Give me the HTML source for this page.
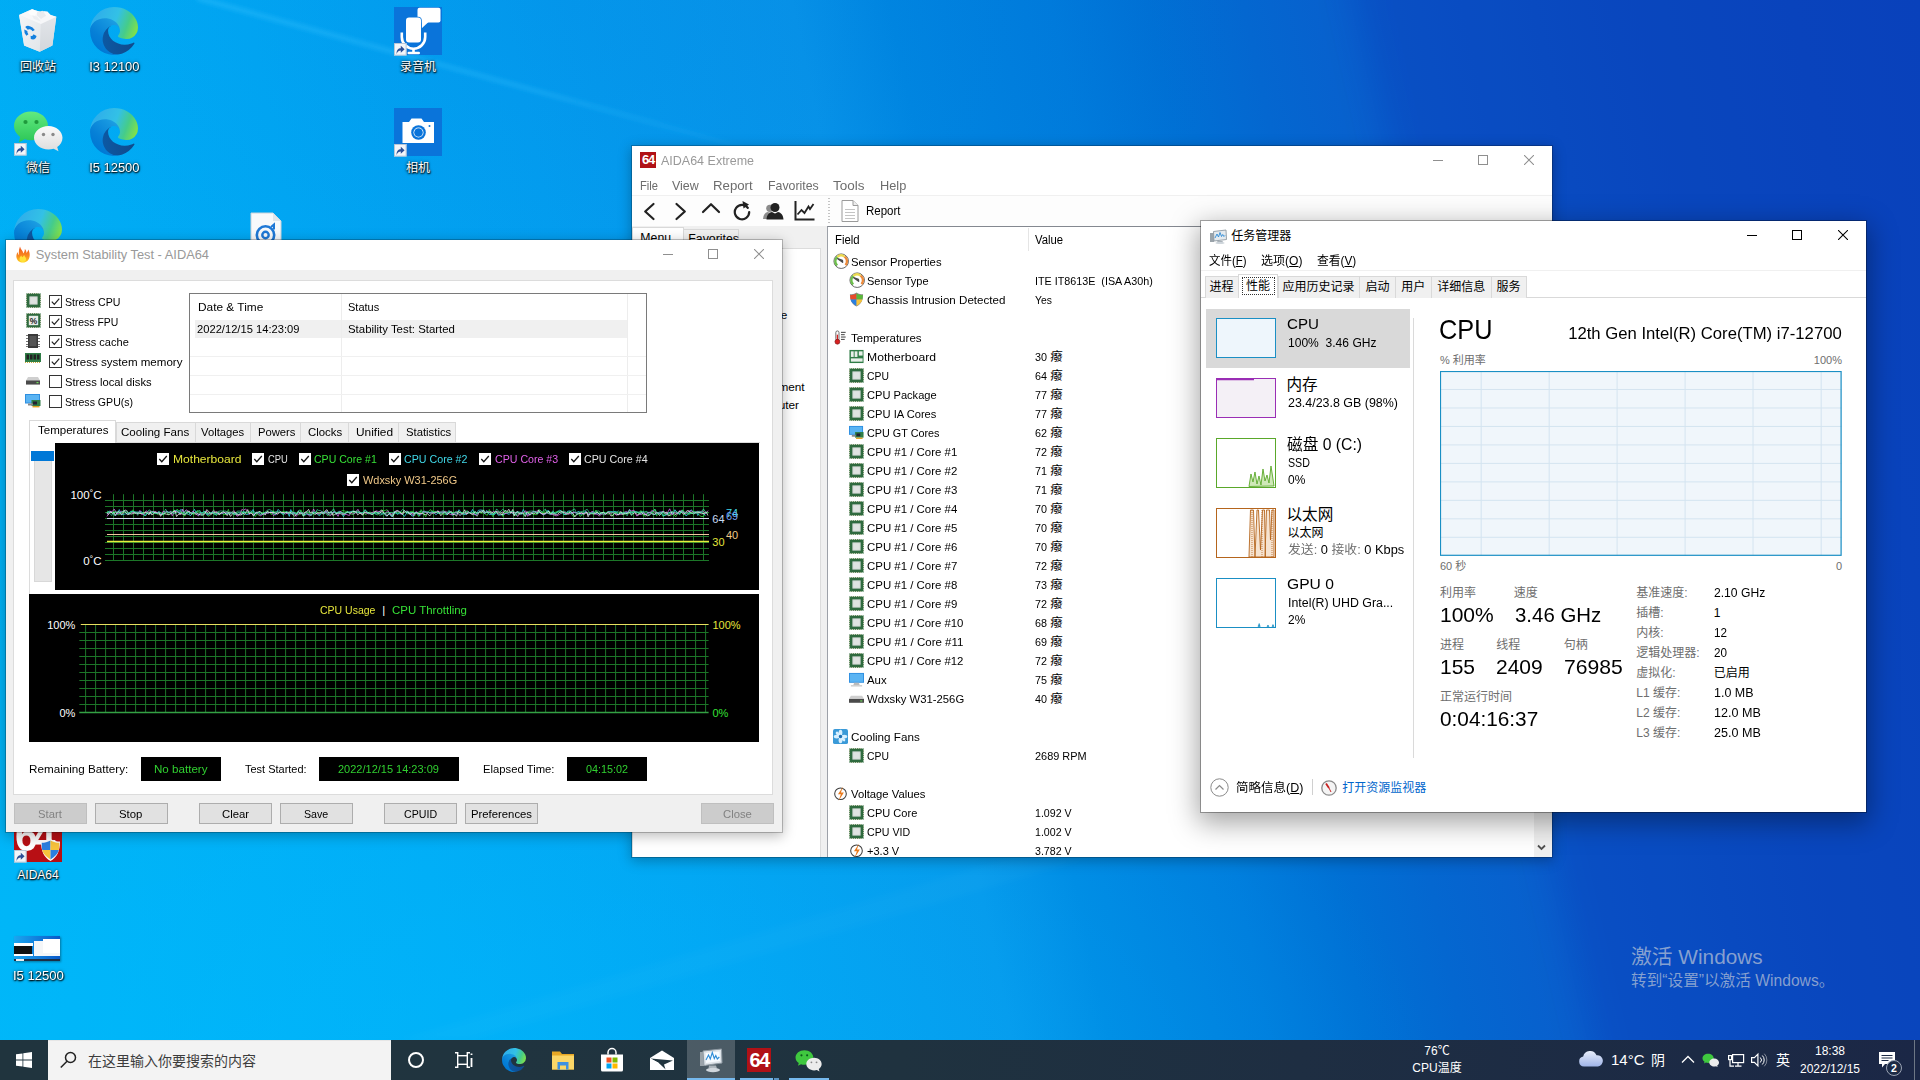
<!DOCTYPE html>
<html lang="zh-CN"><head><meta charset="utf-8"><title>desktop</title>
<style>
*{box-sizing:border-box;margin:0;padding:0}
html,body{width:1920px;height:1080px;overflow:hidden;background:#0a78d8}
body{font-family:"Liberation Sans","Noto Sans CJK SC",sans-serif;font-size:11.6px;color:#000;position:relative}
.a{position:absolute}
.t{position:absolute;white-space:nowrap;line-height:16px;height:16px}
#desk{position:absolute;left:0;top:0;width:1920px;height:1080px;overflow:hidden;
 background:
  radial-gradient(ellipse 1100px 650px at 350px 1150px,rgba(0,190,255,.5) 0,rgba(0,190,255,0) 100%),
  radial-gradient(ellipse 700px 420px at 560px 0px,rgba(0,70,190,.10) 0,rgba(0,70,190,0) 100%),
  linear-gradient(78deg,#00b4f6 0,#00b1f6 6%,#01a9f4 22%,#03a1f1 34%,#0796ea 47.500%,#0088e2 52%,#007cdc 59.500%,#0071d5 64%,#0467d0 68.500%,#0a5ccc 75.500%,#0a56c8 82%,#0a51c5 88%,#0a4ec3 94%,#0a4cc2 100%);}
.win{position:absolute;background:#fff;box-shadow:0 0 0 1px rgba(0,0,0,.22),0 3px 12px 1px rgba(0,0,0,.27)}
.win.act{box-shadow:0 0 0 1px rgba(0,0,0,.32),0 8px 26px 3px rgba(0,0,0,.36)}
.cap{position:absolute;stroke-width:1;fill:none}
.ico-l{position:absolute;color:#fff;font-size:12px;line-height:16px;text-align:center;width:90px;white-space:nowrap;
 text-shadow:0 1px 2px rgba(0,0,0,.9),0 0 3px rgba(0,0,0,.7),1px 1px 1px rgba(0,0,0,.6)}
</style></head>
<body>
<div id="desk">
<svg class="a" style="left:0;top:0" width="1920" height="1080" viewBox="0 0 1920 1080">
<defs>
<linearGradient id="bm1" x1="0" y1="0" x2="0" y2="1"><stop offset="0" stop-color="#fff" stop-opacity="0"/><stop offset=".5" stop-color="#fff" stop-opacity=".16"/><stop offset="1" stop-color="#fff" stop-opacity="0"/></linearGradient>
<linearGradient id="bmg" x1="197" y1="0" x2="745" y2="148" gradientUnits="userSpaceOnUse"><stop offset="0" stop-color="#38c4ff" stop-opacity=".42"/><stop offset=".6" stop-color="#38c4ff" stop-opacity=".32"/><stop offset="1" stop-color="#38c4ff" stop-opacity=".05"/></linearGradient><filter id="blr1" x="-5%" y="-20%" width="110%" height="140%"><feGaussianBlur stdDeviation="2"/></filter><filter id="blr2" x="-10%" y="-10%" width="120%" height="120%"><feGaussianBlur stdDeviation="18"/></filter><filter id="blr" x="-5%" y="-20%" width="110%" height="140%"><feGaussianBlur stdDeviation="3"/></filter><radialGradient id="gl1" cx="1080" cy="520" r="900" gradientUnits="userSpaceOnUse"><stop offset="0" stop-color="#2aa8f0" stop-opacity=".0"/><stop offset="1" stop-color="#2aa8f0" stop-opacity="0"/></radialGradient>
</defs>
<path d="M197 -2 L745 148" stroke="url(#bmg)" stroke-width="4.500" fill="none" filter="url(#blr1)"/>
<polygon points="1010,858 1090,858 470,1040 400,1040" fill="#fff" fill-opacity=".02" filter="url(#blr)"/>
<polygon points="1345,-40 2000,-40 2000,1120 1610,1120" fill="#001a90" fill-opacity=".14" filter="url(#blr2)"/>
</svg>
<svg class="a" style="left:17px;top:7px" width="42" height="46" viewBox="0 0 42 46">
<defs><linearGradient id="rb1" x1="0" y1="0" x2="1" y2="1"><stop offset="0" stop-color="#f3f5f7"/><stop offset="1" stop-color="#e1e5e9"/></linearGradient>
<linearGradient id="rb2" x1="0" y1="0" x2="0" y2="1"><stop offset="0" stop-color="#e2e5e9"/><stop offset="1" stop-color="#d3d7dc"/></linearGradient></defs>
<path d="M2.100 8 L14.900 2.200 L39.300 9.700 L35.400 38.600 L22.700 44.700 L7.100 38.600 Z" fill="#e6e9ed"/>
<path d="M2.100 8 L23.800 16.900 L22.700 44.700 L7.100 38.600 Z" fill="url(#rb1)"/>
<path d="M23.800 16.900 L39.300 9.700 L35.400 38.600 L22.700 44.700 Z" fill="url(#rb2)"/>
<path d="M2.100 8 L14.900 2.200 L39.300 9.700 L23.800 16.900 Z" fill="#f6f7f9"/>
<path d="M11 5.500 l4.500 -3.300 l5 2.800 l-2.500 3.500 l-4.500 -.5z" fill="#fdfdfd"/><path d="M20 5.200 l5.500 -1.500 l5 4 l-6.500 4.300 l-4 -3.500z" fill="#e9ebee"/><path d="M26 4 l4.500 .5 l4 4.500 l-5 .5z" fill="#f8f9fa"/><path d="M15 8.500 l5 1 l4 5 l-7 -2.500z" fill="#eceef1"/>
<g transform="matrix(1 .38 0 1 13.400 25.600)" fill="none" stroke="#1380de" stroke-width="3.100">
<path d="M-3.900 -2.700 A4.700 4.700 0 0 1 3.300 -3.300"/><path d="M4.600 .8 A4.700 4.700 0 0 1 .3 4.700"/><path d="M-3 3.600 A4.700 4.700 0 0 1 -4.600 -.6"/>
</g>
</svg>
<div class="ico-l" style="left:-7px;top:58.5px">回收站</div>
<svg class="a" style="left:90px;top:7px" width="48" height="48" viewBox="0 0 256 256">
<defs>
<linearGradient id="eg1a" x1="63" y1="84" x2="241" y2="84" gradientTransform="matrix(1 0 0 -1 0 266)" gradientUnits="userSpaceOnUse"><stop offset="0" stop-color="#0c59a4"/><stop offset="1" stop-color="#114a8b"/></linearGradient>
<linearGradient id="eg2a" x1="157" y1="161" x2="46" y2="40" gradientTransform="matrix(1 0 0 -1 0 266)" gradientUnits="userSpaceOnUse"><stop offset="0" stop-color="#1b9de2"/><stop offset=".16" stop-color="#1595df"/><stop offset=".67" stop-color="#0680d7"/><stop offset="1" stop-color="#0078d4"/></linearGradient>
<radialGradient id="eg3a" cx="-25" cy="218" r="380" gradientUnits="userSpaceOnUse" gradientTransform="translate(30 -170)"><stop offset="0" stop-color="#35c1f1"/><stop offset=".45" stop-color="#34c1ed"/><stop offset=".6" stop-color="#2fc2df"/><stop offset=".72" stop-color="#2bc3d2"/><stop offset=".88" stop-color="#36c752"/><stop offset="1" stop-color="#7fe04d"/></radialGradient>
<linearGradient id="eg4a" x1="40" y1="40" x2="250" y2="120" gradientUnits="userSpaceOnUse"><stop offset="0" stop-color="#2fb0ea"/><stop offset=".45" stop-color="#33c1e6"/><stop offset=".75" stop-color="#45cc8a"/><stop offset="1" stop-color="#7fe04d"/></linearGradient>
</defs>
<path d="M231.1 190.5a93.800 93.800 0 0 1-10.500 4.700 101.900 101.900 0 0 1-35.900 6.400c-47.300 0-88.500-32.500-88.500-74.300a31.500 31.500 0 0 1 16.400-27.300c-42.800 1.800-53.800 46.400-53.800 72.500 0 73.900 68.100 81.400 82.800 81.400 7.900 0 19.800-2.300 27-4.600l1.300-.4a128.300 128.300 0 0 0 66.600-52.800 4 4 0 0 0-5.400-5.600z" fill="url(#eg1a)"/>
<path d="M105.700 241.400a79.200 79.200 0 0 1-22.700-21.300 80.700 80.700 0 0 1 29.500-120c3.200-1.500 8.500-4.200 15.600-4.100a32.400 32.400 0 0 1 25.700 13 31.900 31.900 0 0 1 6.300 18.700c0-.2 24.500-79.600-80-79.600-43.900 0-80 41.600-80 78.200a130.200 130.200 0 0 0 12.100 56 128 128 0 0 0 156.400 67 75.500 75.500 0 0 1-62.800-7.900z" fill="url(#eg2a)"/>
<path d="M152.300 148.900c-.9 1-3.400 2.500-3.400 5.600 0 2.600 1.700 5.200 4.800 7.300 14.300 10 41.400 8.600 41.500 8.600a59.600 59.600 0 0 0 30.300-8.300 61.400 61.400 0 0 0 30.400-52.900c.3-22.400-8-37.300-11.300-43.900C223.500 24.200 178 0 128 0a128 128 0 0 0-128 126.200c.5-36.500 36.800-66 80-66 3.500 0 23.500.3 42 10 16.300 8.600 24.800 18.900 30.800 29.200 6.100 10.600 7.200 24.100 7.200 29.500 0 5.300-2.700 13.300-7.800 19.900z" fill="url(#eg4a)"/>
</svg>
<div class="ico-l" style="left:69px;top:58.5px"><span style="display:inline-block;transform:scaleX(1.075)">I3 12100</span></div>
<svg class="a" style="left:90px;top:108px" width="48" height="48" viewBox="0 0 256 256">
<defs>
<linearGradient id="eg1b" x1="63" y1="84" x2="241" y2="84" gradientTransform="matrix(1 0 0 -1 0 266)" gradientUnits="userSpaceOnUse"><stop offset="0" stop-color="#0c59a4"/><stop offset="1" stop-color="#114a8b"/></linearGradient>
<linearGradient id="eg2b" x1="157" y1="161" x2="46" y2="40" gradientTransform="matrix(1 0 0 -1 0 266)" gradientUnits="userSpaceOnUse"><stop offset="0" stop-color="#1b9de2"/><stop offset=".16" stop-color="#1595df"/><stop offset=".67" stop-color="#0680d7"/><stop offset="1" stop-color="#0078d4"/></linearGradient>
<radialGradient id="eg3b" cx="-25" cy="218" r="380" gradientUnits="userSpaceOnUse" gradientTransform="translate(30 -170)"><stop offset="0" stop-color="#35c1f1"/><stop offset=".45" stop-color="#34c1ed"/><stop offset=".6" stop-color="#2fc2df"/><stop offset=".72" stop-color="#2bc3d2"/><stop offset=".88" stop-color="#36c752"/><stop offset="1" stop-color="#7fe04d"/></radialGradient>
<linearGradient id="eg4b" x1="40" y1="40" x2="250" y2="120" gradientUnits="userSpaceOnUse"><stop offset="0" stop-color="#2fb0ea"/><stop offset=".45" stop-color="#33c1e6"/><stop offset=".75" stop-color="#45cc8a"/><stop offset="1" stop-color="#7fe04d"/></linearGradient>
</defs>
<path d="M231.1 190.5a93.800 93.800 0 0 1-10.500 4.700 101.900 101.900 0 0 1-35.900 6.400c-47.300 0-88.500-32.500-88.500-74.300a31.500 31.500 0 0 1 16.400-27.300c-42.800 1.800-53.800 46.400-53.800 72.500 0 73.900 68.100 81.400 82.800 81.400 7.900 0 19.800-2.300 27-4.600l1.300-.4a128.300 128.300 0 0 0 66.600-52.800 4 4 0 0 0-5.400-5.600z" fill="url(#eg1b)"/>
<path d="M105.700 241.400a79.200 79.200 0 0 1-22.700-21.300 80.700 80.700 0 0 1 29.500-120c3.200-1.500 8.500-4.200 15.600-4.100a32.400 32.400 0 0 1 25.700 13 31.900 31.900 0 0 1 6.300 18.700c0-.2 24.500-79.600-80-79.600-43.900 0-80 41.600-80 78.200a130.200 130.200 0 0 0 12.100 56 128 128 0 0 0 156.400 67 75.500 75.500 0 0 1-62.800-7.900z" fill="url(#eg2b)"/>
<path d="M152.300 148.900c-.9 1-3.400 2.500-3.400 5.600 0 2.600 1.700 5.200 4.800 7.300 14.300 10 41.400 8.600 41.500 8.600a59.600 59.600 0 0 0 30.300-8.300 61.400 61.400 0 0 0 30.400-52.900c.3-22.400-8-37.300-11.300-43.900C223.500 24.200 178 0 128 0a128 128 0 0 0-128 126.200c.5-36.500 36.800-66 80-66 3.500 0 23.500.3 42 10 16.300 8.600 24.800 18.900 30.800 29.200 6.100 10.600 7.200 24.100 7.200 29.500 0 5.300-2.700 13.300-7.800 19.900z" fill="url(#eg4b)"/>
</svg>
<div class="ico-l" style="left:69px;top:159.5px"><span style="display:inline-block;transform:scaleX(1.075)">I5 12500</span></div>
<svg class="a" style="left:14px;top:209px" width="48" height="48" viewBox="0 0 256 256">
<defs>
<linearGradient id="eg1c" x1="63" y1="84" x2="241" y2="84" gradientTransform="matrix(1 0 0 -1 0 266)" gradientUnits="userSpaceOnUse"><stop offset="0" stop-color="#0c59a4"/><stop offset="1" stop-color="#114a8b"/></linearGradient>
<linearGradient id="eg2c" x1="157" y1="161" x2="46" y2="40" gradientTransform="matrix(1 0 0 -1 0 266)" gradientUnits="userSpaceOnUse"><stop offset="0" stop-color="#1b9de2"/><stop offset=".16" stop-color="#1595df"/><stop offset=".67" stop-color="#0680d7"/><stop offset="1" stop-color="#0078d4"/></linearGradient>
<radialGradient id="eg3c" cx="-25" cy="218" r="380" gradientUnits="userSpaceOnUse" gradientTransform="translate(30 -170)"><stop offset="0" stop-color="#35c1f1"/><stop offset=".45" stop-color="#34c1ed"/><stop offset=".6" stop-color="#2fc2df"/><stop offset=".72" stop-color="#2bc3d2"/><stop offset=".88" stop-color="#36c752"/><stop offset="1" stop-color="#7fe04d"/></radialGradient>
<linearGradient id="eg4c" x1="40" y1="40" x2="250" y2="120" gradientUnits="userSpaceOnUse"><stop offset="0" stop-color="#2fb0ea"/><stop offset=".45" stop-color="#33c1e6"/><stop offset=".75" stop-color="#45cc8a"/><stop offset="1" stop-color="#7fe04d"/></linearGradient>
</defs>
<path d="M231.1 190.5a93.800 93.800 0 0 1-10.500 4.700 101.900 101.900 0 0 1-35.900 6.400c-47.300 0-88.500-32.500-88.500-74.300a31.500 31.500 0 0 1 16.400-27.300c-42.800 1.800-53.800 46.400-53.800 72.500 0 73.900 68.100 81.400 82.800 81.400 7.900 0 19.800-2.300 27-4.600l1.300-.4a128.300 128.300 0 0 0 66.600-52.800 4 4 0 0 0-5.400-5.600z" fill="url(#eg1c)"/>
<path d="M105.700 241.400a79.200 79.200 0 0 1-22.700-21.300 80.700 80.700 0 0 1 29.500-120c3.200-1.500 8.500-4.200 15.600-4.100a32.400 32.400 0 0 1 25.700 13 31.900 31.900 0 0 1 6.300 18.700c0-.2 24.500-79.600-80-79.600-43.900 0-80 41.600-80 78.200a130.200 130.200 0 0 0 12.100 56 128 128 0 0 0 156.400 67 75.500 75.500 0 0 1-62.800-7.900z" fill="url(#eg2c)"/>
<path d="M152.300 148.900c-.9 1-3.400 2.500-3.400 5.600 0 2.600 1.700 5.200 4.800 7.300 14.300 10 41.400 8.600 41.500 8.600a59.600 59.600 0 0 0 30.300-8.300 61.400 61.400 0 0 0 30.400-52.900c.3-22.400-8-37.300-11.300-43.900C223.500 24.200 178 0 128 0a128 128 0 0 0-128 126.200c.5-36.500 36.800-66 80-66 3.500 0 23.500.3 42 10 16.300 8.600 24.800 18.900 30.800 29.200 6.100 10.600 7.200 24.100 7.200 29.500 0 5.300-2.700 13.300-7.800 19.900z" fill="url(#eg4c)"/>
</svg>
<div class="a" style="left:394px;top:7px;width:48px;height:48px;background:#0a74da"></div>
<svg class="a" style="left:394px;top:7px" width="48" height="48" viewBox="0 0 48 48" fill="#fff">
<rect x="23.500" y=".8" width="23" height="14.700" rx="2"/><path d="M27.500 15h7l-7 6.500z"/>
<rect x="11.200" y="9.700" width="16.600" height="26.600" rx="3.800" fill="#0a74da"/>
<rect x="12" y="10.500" width="15" height="25" rx="3"/>
<path d="M7.800 25.500v4.500a11.700 11.700 0 0 0 23.400 0v-4.500" fill="none" stroke="#fff" stroke-width="2.600"/>
<rect x="18.200" y="41" width="2.600" height="4.500"/><rect x="13.500" y="44.700" width="12.500" height="2.500" rx="1.200"/>
</svg>
<svg class="a" style="left:394px;top:43px" width="12.500" height="12.500" viewBox="0 0 12.500 12.500"><rect width="12.500" height="12.500" fill="#f2f5f9"/><rect x=".4" y=".4" width="11.700" height="11.700" fill="none" stroke="#a9bccf" stroke-width=".8"/><path d="M2.600 11 C2.400 7.200 4.200 5.200 6.800 5.200 L6.800 2.800 L10.600 6.300 L6.800 9.800 L6.800 7.500 C5 7.500 3.600 8.300 2.600 11Z" fill="#2c4f96"/></svg>
<div class="ico-l" style="left:373px;top:58.5px">录音机</div>
<div class="a" style="left:394px;top:108px;width:48px;height:48px;background:#0a74da"></div>
<svg class="a" style="left:394px;top:108px" width="48" height="48" viewBox="0 0 48 48">
<path d="M8.500 14h6.500l2.500-3.500h10l2.500 3.500h10v21h-31.500z" fill="#fff"/>
<circle cx="24.500" cy="24.500" r="7.300" fill="#0a74da"/><circle cx="24.500" cy="24.500" r="5" fill="#fff"/><circle cx="24.500" cy="24.500" r="4.300" fill="#0a74da"/>
<circle cx="35.500" cy="18" r="1" fill="#0a74da"/></svg>
<svg class="a" style="left:394px;top:144px" width="12.500" height="12.500" viewBox="0 0 12.500 12.500"><rect width="12.500" height="12.500" fill="#f2f5f9"/><rect x=".4" y=".4" width="11.700" height="11.700" fill="none" stroke="#a9bccf" stroke-width=".8"/><path d="M2.600 11 C2.400 7.200 4.200 5.200 6.800 5.200 L6.800 2.800 L10.600 6.300 L6.800 9.800 L6.800 7.500 C5 7.500 3.600 8.300 2.600 11Z" fill="#2c4f96"/></svg>
<div class="ico-l" style="left:373px;top:159.5px">相机</div>
<svg class="a" style="left:13px;top:110px" width="52" height="44" viewBox="0 0 52 44">
<defs><linearGradient id="wc1" x1="0" y1="0" x2="0" y2="1"><stop offset="0" stop-color="#62ea80"/><stop offset="1" stop-color="#2cc656"/></linearGradient>
<linearGradient id="wc2" x1="0" y1="0" x2="0" y2="1"><stop offset="0" stop-color="#fafafa"/><stop offset="1" stop-color="#dcdcdc"/></linearGradient></defs>
<path d="M18 1.500C8.600 1.500 1 7.800 1 15.800c0 4.500 2.400 8.400 6.200 11.100L5.700 32.500l6-3.200c2 .6 4.100 1 6.300 1 9.400 0 17-6.400 17-14.500S27.400 1.500 18 1.500z" fill="url(#wc1)"/>
<circle cx="12.500" cy="12" r="2.100" fill="#1f9a3c"/><circle cx="23.500" cy="12" r="2.100" fill="#1f9a3c"/>
<path d="M35.500 16C27.500 16 21 21.200 21 27.700S27.500 39.500 35.500 39.500c1.800 0 3.500-.3 5.100-.8l4.900 2.600-1.300-4.300c3.300-2.100 5.300-5.400 5.300-9.200C49.500 21.200 43.200 16 35.500 16z" fill="url(#wc2)"/>
<circle cx="30.500" cy="24.500" r="1.700" fill="#8a8a8a"/><circle cx="40" cy="24.500" r="1.700" fill="#8a8a8a"/>
</svg>
<svg class="a" style="left:14px;top:143px" width="12.500" height="12.500" viewBox="0 0 12.500 12.500"><rect width="12.500" height="12.500" fill="#f2f5f9"/><rect x=".4" y=".4" width="11.700" height="11.700" fill="none" stroke="#a9bccf" stroke-width=".8"/><path d="M2.600 11 C2.400 7.200 4.200 5.200 6.800 5.200 L6.800 2.800 L10.600 6.300 L6.800 9.800 L6.800 7.500 C5 7.500 3.600 8.300 2.600 11Z" fill="#2c4f96"/></svg>
<div class="ico-l" style="left:-7px;top:159.5px">微信</div>
<svg class="a" style="left:250px;top:212px" width="32" height="40" viewBox="0 0 32 40">
<path d="M1 1h22l8 8v30h-30z" fill="#f7f9fb" stroke="#c9d3dc" stroke-width="1"/><path d="M23 1v8h8z" fill="#dfe6ec"/>
<circle cx="15.500" cy="23" r="8.700" fill="none" stroke="#1e78d6" stroke-width="2.600"/><circle cx="15.500" cy="23" r="3.200" fill="none" stroke="#1e78d6" stroke-width="2.400"/><path d="M21 15l3-2.500v5" fill="none" stroke="#1e78d6" stroke-width="2"/>
</svg>
<div class="a" style="left:14px;top:814px;width:48px;height:48px;background:#b80f14;overflow:hidden">
<div class="a" style="left:1px;top:-2px;font:bold 44px/48px 'Liberation Sans',sans-serif;color:#fff;letter-spacing:-5px;transform:scaleX(.92);transform-origin:0 0">64</div></div>
<svg class="a" style="left:40px;top:838px" width="21" height="24" viewBox="0 0 21 24"><path d="M10.500 1C7 3 4 3.500 1 3.500c0 9 2.500 15.500 9.500 19.500 7-4 9.500-10.500 9.500-19.500-3 0-6-.5-9.500-2.500z" fill="#fff"/>
<path d="M10.500 2.500v9.500h-8.300c-.4-2.300-.5-4.600-.5-7.200 3 0 5.800-.6 8.800-2.300z" fill="#2a7fe0"/><path d="M10.500 2.500c3 1.700 5.800 2.300 8.800 2.300 0 2.600-.1 4.900-.5 7.200h-8.300z" fill="#f7c33c"/>
<path d="M2.200 12h8.300v9.500c-4.700-2.800-7.300-5.700-8.300-9.500z" fill="#f7c33c"/><path d="M10.500 12h8.300c-1 3.800-3.600 6.700-8.300 9.500z" fill="#2a7fe0"/></svg>
<svg class="a" style="left:14px;top:850px" width="12.500" height="12.500" viewBox="0 0 12.500 12.500"><rect width="12.500" height="12.500" fill="#f2f5f9"/><rect x=".4" y=".4" width="11.700" height="11.700" fill="none" stroke="#a9bccf" stroke-width=".8"/><path d="M2.600 11 C2.400 7.200 4.200 5.200 6.800 5.200 L6.800 2.800 L10.600 6.300 L6.800 9.800 L6.800 7.500 C5 7.500 3.600 8.300 2.600 11Z" fill="#2c4f96"/></svg>
<div class="ico-l" style="left:-7px;top:866.5px"><span style="display:inline-block;transform:scaleX(1.0)">AIDA64</span></div>
<div class="a" style="left:14px;top:936px;width:46px;height:25px;background:linear-gradient(90deg,#1aa6f0,#0a58c8);box-shadow:1px 1px 2px rgba(0,0,0,.35)">
<div class="a" style="left:0;top:10px;width:18px;height:8px;background:#111"></div><div class="a" style="left:0;top:7px;width:19px;height:3px;background:#fff"></div><div class="a" style="left:0;top:18px;width:19px;height:2px;background:#fff"></div>
<div class="a" style="left:20px;top:5px;width:26px;height:15px;background:#f4f6f8"></div><div class="a" style="left:29px;top:3px;width:17px;height:14px;background:#fff"></div>
<div class="a" style="left:0;top:23px;width:46px;height:2px;background:#1c2f44"></div><div class="a" style="left:2px;top:23px;width:8px;height:2px;background:#eee"></div></div>
<div class="ico-l" style="left:-6.5px;top:967.5px"><span style="display:inline-block;transform:scaleX(1.09)">I5 12500</span></div>
<div class="t" style="left:1631px;top:945px;font-size:20.800px;line-height:24px;height:24px;color:rgba(200,206,216,.66)">激活 Windows</div>
<div class="t" style="left:1631px;top:971px;font-size:15.650px;line-height:20px;height:20px;color:rgba(200,206,216,.66)">转到“设置”以激活 Windows。</div>
<div class="win" style="left:632px;top:146px;width:920px;height:711px;"><div class="a" style="left:0;top:0;width:920px;height:711px;overflow:hidden"><div class="a" style="left:8px;top:6px;width:16px;height:16px;background:#b01116;overflow:hidden"><div class="a" style="left:0;top:1px;width:16px;text-align:center;font:bold 13px/14px 'Liberation Sans',sans-serif;color:#fff;letter-spacing:-1.200px">64</div></div>
<div class="t" style="left:29.3px;top:6.7px;line-height:16px;height:16px;font-size:12.800px;color:#999;transform:scaleX(0.9766);transform-origin:0 50%">AIDA64 Extreme</div>
<svg class="a" style="left:801px;top:9px;" width="10" height="10" viewBox="0 0 10 10"><path d="M0 5.500h10" stroke="#8f8f8f" stroke-width="1" fill="none"/></svg>
<svg class="a" style="left:846px;top:9px;" width="10" height="10" viewBox="0 0 10 10"><rect x=".5" y=".5" width="9" height="9" stroke="#8f8f8f" stroke-width="1" fill="none"/></svg>
<svg class="a" style="left:892px;top:9px;" width="10" height="10" viewBox="0 0 10 10"><path d="M0 0 10 10M10 0 0 10" stroke="#8f8f8f" stroke-width="1.050" fill="none"/></svg>
<div class="t" style="left:7.5px;top:31.8px;line-height:16px;height:16px;font-size:12.600px;color:#6d6d6d;transform:scaleX(0.8865);transform-origin:0 50%">File</div>
<div class="t" style="left:40px;top:31.8px;line-height:16px;height:16px;font-size:12.600px;color:#6d6d6d;transform:scaleX(0.9895);transform-origin:0 50%">View</div>
<div class="t" style="left:81.3px;top:31.8px;line-height:16px;height:16px;font-size:12.600px;color:#6d6d6d;transform:scaleX(1.0497);transform-origin:0 50%">Report</div>
<div class="t" style="left:135.5px;top:31.8px;line-height:16px;height:16px;font-size:12.600px;color:#6d6d6d;transform:scaleX(0.9804);transform-origin:0 50%">Favorites</div>
<div class="t" style="left:201px;top:31.8px;line-height:16px;height:16px;font-size:12.600px;color:#6d6d6d;transform:scaleX(1.0709);transform-origin:0 50%">Tools</div>
<div class="t" style="left:247.5px;top:31.8px;line-height:16px;height:16px;font-size:12.600px;color:#6d6d6d;transform:scaleX(1.0149);transform-origin:0 50%">Help</div>
<div class="a" style="left:0px;top:48.5px;width:920px;height:1.5px;background:#f0f0f0"></div>
<div class="a" style="left:0px;top:50px;width:920px;height:30px;background:#fdfdfd"></div>
<svg class="a" style="left:11px;top:55.5px;" width="13" height="19" viewBox="0 0 13 19"><path d="M10.500 2 2.200 9.500 10.500 17" fill="none" stroke="#222" stroke-width="2.200" stroke-linecap="round" stroke-linejoin="round"/></svg>
<svg class="a" style="left:41.5px;top:55.5px;" width="13" height="19" viewBox="0 0 13 19"><path d="M2.500 2 10.800 9.500 2.500 17" fill="none" stroke="#222" stroke-width="2.200" stroke-linecap="round" stroke-linejoin="round"/></svg>
<svg class="a" style="left:69px;top:56px;" width="20" height="12" viewBox="0 0 20 12"><path d="M2 10 10 2.200 18 10" fill="none" stroke="#222" stroke-width="2.200" stroke-linecap="round" stroke-linejoin="round"/></svg>
<svg class="a" style="left:99.5px;top:54px;" width="20" height="21" viewBox="0 0 20 21"><path d="M15.800 7.800A7.200 7.200 0 1 0 17.200 12" fill="none" stroke="#222" stroke-width="2.200" stroke-linecap="round" stroke-linejoin="round"/><path d="M10.500 1l6.500 3.500-5.500 4z" fill="#222"/></svg>
<svg class="a" style="left:131px;top:56px;" width="21" height="18" viewBox="0 0 21 18"><circle cx="6.800" cy="6.300" r="3.600" fill="#8c8c8c"/><path d="M0 17c.3-4 2-6.300 4.500-7l4 1-2 6z" fill="#8c8c8c"/><circle cx="12" cy="5.500" r="4.500" fill="#222"/><path d="M3.500 17.500c.3-4.500 2.500-7 5.500-7.500l3 1.500 3-1.500c3 .5 5.200 3 5.500 7.500z" fill="#222"/></svg>
<svg class="a" style="left:162px;top:55px;" width="21" height="20" viewBox="0 0 21 20"><path d="M1.500 0v18.500h19" fill="none" stroke="#222" stroke-width="2"/><path d="M3.500 13.500 7.500 9l3 3 4-6.500 1.500 2.500 3.500-5" fill="none" stroke="#222" stroke-width="1.800"/></svg>
<div class="a" style="left:196.3px;top:51.5px;width:1.5px;height:26px;background:repeating-linear-gradient(180deg,#c4c4c4 0,#c4c4c4 1.500px,transparent 1.500px,transparent 3px)"></div>
<svg class="a" style="left:208.5px;top:54px;" width="18" height="22" viewBox="0 0 18 22"><path d="M1 .5h11l5 5v16h-16z" fill="#fff" stroke="#9a9a9a" stroke-width="1"/><path d="M12 .5v5h5" fill="#eee" stroke="#9a9a9a" stroke-width="1"/><path d="M4 9.500h10M4 12.500h10M4 15.500h10M4 18.500h10" stroke="#c4c4c4" stroke-width="1"/></svg>
<div class="t" style="left:234.3px;top:56.8px;line-height:16px;height:16px;font-size:12px;transform:scaleX(0.9578);transform-origin:0 50%">Report</div>
<div class="a" style="left:0px;top:80px;width:920px;height:631px;background:#f0f0f0"></div>
<div class="a" style="left:0px;top:101.5px;width:188.8px;height:610px;background:#fff;border:1px solid #dcdcdc"></div>
<div class="a" style="left:51px;top:82.5px;width:56px;height:18px;background:#f0f0f0;border:1px solid #d9d9d9"></div>
<div class="a" style="left:0px;top:80.5px;width:51.5px;height:20px;background:#fff;border:1px solid #d9d9d9;border-bottom:none"></div>
<div class="t" style="left:8.3px;top:83.5px;line-height:16px;height:16px;font-size:12.300px">Menu</div>
<div class="t" style="left:56.3px;top:85px;line-height:16px;height:16px;font-size:12.300px">Favorites</div>
<div class="t" style="right:764.6px;top:161px;line-height:16px;height:16px;font-size:11.800px">Storage</div>
<div class="t" style="right:747.4px;top:233px;line-height:16px;height:16px;font-size:11.800px">Management</div>
<div class="t" style="right:753px;top:251px;line-height:16px;height:16px;font-size:11.800px">Computer</div>
<div class="a" style="left:195px;top:80px;width:723.5px;height:631px;background:#fff;border-top:1px solid #848890;border-left:1px solid #9da1a8"></div>
<div class="a" style="left:395.8px;top:82px;width:1px;height:23px;background:#e5e5e5"></div>
<div class="t" style="left:203.3px;top:85.8px;line-height:16px;height:16px;font-size:12px;transform:scaleX(0.9496);transform-origin:0 50%">Field</div>
<div class="t" style="left:403px;top:85.8px;line-height:16px;height:16px;font-size:12px;transform:scaleX(0.9429);transform-origin:0 50%">Value</div>
<div class="a" style="left:902px;top:81.5px;width:16.5px;height:629.5px;background:#f0f0f0"></div>
<svg class="a" style="left:904.5px;top:697.5px;" width="9" height="7" viewBox="0 0 9 7"><path d="M1 1.500 4.500 5 8 1.500" fill="none" stroke="#505050" stroke-width="1.800"/></svg>
<svg class="a" style="left:200.9px;top:107.1px;" width="16.4" height="16.4" viewBox="0 0 16 16"><circle cx="8" cy="8" r="7.100" fill="#fff" stroke="#5c5c5c" stroke-width=".9"/><path d="M4.100 12.200A5.600 5.600 0 0 1 4.300 3.700" fill="none" stroke="#6cbf4a" stroke-width="2.300"/><path d="M4.300 3.700A5.600 5.600 0 0 1 11.300 3.500" fill="none" stroke="#ecd94e" stroke-width="2.300"/><path d="M11.300 3.500A5.600 5.600 0 0 1 12.200 11.800" fill="none" stroke="#ec8a3a" stroke-width="2.300"/><path d="M9.400 9 4.600 5.600 9.200 7.200z" fill="#4a4a4a" stroke="#4a4a4a" stroke-width="1.300" stroke-linejoin="round"/></svg>
<div class="t" style="left:218.6px;top:108px;line-height:16px;height:16px;font-size:11.800px;transform:scaleX(0.9592);transform-origin:0 50%">Sensor Properties</div>
<svg class="a" style="left:216.8px;top:126.1px;" width="16.4" height="16.4" viewBox="0 0 16 16"><circle cx="8" cy="8" r="7.100" fill="#fff" stroke="#5c5c5c" stroke-width=".9"/><path d="M4.100 12.200A5.600 5.600 0 0 1 4.300 3.700" fill="none" stroke="#6cbf4a" stroke-width="2.300"/><path d="M4.300 3.700A5.600 5.600 0 0 1 11.300 3.500" fill="none" stroke="#ecd94e" stroke-width="2.300"/><path d="M11.300 3.500A5.600 5.600 0 0 1 12.200 11.800" fill="none" stroke="#ec8a3a" stroke-width="2.300"/><path d="M9.400 9 4.600 5.600 9.200 7.200z" fill="#4a4a4a" stroke="#4a4a4a" stroke-width="1.300" stroke-linejoin="round"/></svg>
<div class="t" style="left:234.8px;top:127px;line-height:16px;height:16px;font-size:11.800px;transform:scaleX(0.9328);transform-origin:0 50%">Sensor Type</div>
<div class="t" style="left:403px;top:127px;line-height:16px;height:16px;font-size:11.800px;transform:scaleX(0.9116);transform-origin:0 50%">ITE IT8613E&nbsp; (ISA A30h)</div>
<svg class="a" style="left:217.1px;top:145.8px;" width="15" height="15" viewBox="0 0 16 16"><path d="M8 .5C5.500 2 3.500 2.500 1 2.500c0 6 1.500 10.500 7 13 5.500-2.500 7-7 7-13-2.500 0-4.500-.5-7-2z" fill="#8a8a8a"/><path d="M8 1.500v6.500H1.700c-.3-1.500-.4-3-.4-4.700 2.300 0 4.300-.6 6.700-1.800z" fill="#e84a2a"/><path d="M8 1.500c2.400 1.200 4.400 1.800 6.700 1.800 0 1.700-.1 3.200-.4 4.700H8z" fill="#5ab83a"/><path d="M1.700 8H8v6.800C4.500 13 2.500 11 1.700 8z" fill="#2a7fe0"/><path d="M8 8h6.300c-.8 3-2.800 5-6.300 6.800z" fill="#f7c33c"/></svg>
<div class="t" style="left:234.8px;top:146px;line-height:16px;height:16px;font-size:11.800px;transform:scaleX(0.9815);transform-origin:0 50%">Chassis Intrusion Detected</div>
<div class="t" style="left:403px;top:146px;line-height:16px;height:16px;font-size:11.800px;transform:scaleX(0.8779);transform-origin:0 50%">Yes</div>
<svg class="a" style="left:201.2px;top:183.8px;" width="15" height="15" viewBox="0 0 16 16"><rect x="3" y="1" width="3.400" height="10" rx="1.700" fill="#fff" stroke="#555" stroke-width=".9"/><rect x="4" y="5" width="1.400" height="6" fill="#d82020"/><circle cx="4.700" cy="12.500" r="2.600" fill="#d82020" stroke="#7a1010" stroke-width=".7"/><path d="M8.500 2.500h5M8.500 5h4M8.500 7.500h5M8.500 10h4" stroke="#333" stroke-width="1"/></svg>
<div class="t" style="left:218.6px;top:184px;line-height:16px;height:16px;font-size:11.800px;transform:scaleX(0.9786);transform-origin:0 50%">Temperatures</div>
<svg class="a" style="left:217.1px;top:202.8px;" width="15" height="15" viewBox="0 0 16 16"><rect x=".5" y="1" width="15" height="14" fill="#2f7d46"/><rect x="2" y="2.500" width="3" height="6" fill="#e8efe9"/><rect x="6" y="2.500" width="3" height="6" fill="#e8efe9"/><rect x="10.500" y="2.500" width="4" height="4.500" fill="#e8efe9"/><rect x="2" y="10" width="12.500" height="3.500" fill="#e8efe9"/></svg>
<div class="t" style="left:234.8px;top:203px;line-height:16px;height:16px;font-size:11.800px;transform:scaleX(1.0313);transform-origin:0 50%">Motherboard</div>
<div class="t" style="left:403px;top:203px;line-height:16px;height:16px;font-size:11.800px;transform:scaleX(0.9142);transform-origin:0 50%">30</div>
<div class="t" style="left:418.3px;top:203px;line-height:16px;height:16px;font-size:12.500px">癈</div>
<svg class="a" style="left:217.1px;top:221.8px;" width="15" height="15" viewBox="0 0 16 16"><rect x="1" y="1" width="14" height="14" fill="#2f6b3f"/><path d="M2.500 0v16M4.500 0v16M6.500 0v16M8.500 0v16M10.500 0v16M12.500 0v16M0 2.500h16M0 4.500h16M0 6.500h16M0 8.500h16M0 10.500h16M0 12.500h16" stroke="#8a7a3a" stroke-width=".6" stroke-dasharray="1 14" /><rect x=".5" y=".5" width="15" height="15" fill="none" stroke="#3f7a4c" stroke-width="1" stroke-dasharray="1 1"/><rect x="1.500" y="1.500" width="13" height="13" fill="#2f6b3f"/><rect x="4" y="4" width="8" height="8" fill="#dfe3e1"/><rect x="4" y="4" width="8" height="8" fill="none" stroke="#b8c4bc" stroke-width=".8"/></svg>
<div class="t" style="left:234.8px;top:222px;line-height:16px;height:16px;font-size:11.800px;transform:scaleX(0.8790);transform-origin:0 50%">CPU</div>
<div class="t" style="left:403px;top:222px;line-height:16px;height:16px;font-size:11.800px;transform:scaleX(0.9142);transform-origin:0 50%">64</div>
<div class="t" style="left:418.3px;top:222px;line-height:16px;height:16px;font-size:12.500px">癈</div>
<svg class="a" style="left:217.1px;top:240.8px;" width="15" height="15" viewBox="0 0 16 16"><rect x="1" y="1" width="14" height="14" fill="#2f6b3f"/><path d="M2.500 0v16M4.500 0v16M6.500 0v16M8.500 0v16M10.500 0v16M12.500 0v16M0 2.500h16M0 4.500h16M0 6.500h16M0 8.500h16M0 10.500h16M0 12.500h16" stroke="#8a7a3a" stroke-width=".6" stroke-dasharray="1 14" /><rect x=".5" y=".5" width="15" height="15" fill="none" stroke="#3f7a4c" stroke-width="1" stroke-dasharray="1 1"/><rect x="1.500" y="1.500" width="13" height="13" fill="#2f6b3f"/><rect x="4" y="4" width="8" height="8" fill="#dfe3e1"/><rect x="4" y="4" width="8" height="8" fill="none" stroke="#b8c4bc" stroke-width=".8"/></svg>
<div class="t" style="left:234.8px;top:241px;line-height:16px;height:16px;font-size:11.800px;transform:scaleX(0.9404);transform-origin:0 50%">CPU Package</div>
<div class="t" style="left:403px;top:241px;line-height:16px;height:16px;font-size:11.800px;transform:scaleX(0.9142);transform-origin:0 50%">77</div>
<div class="t" style="left:418.3px;top:241px;line-height:16px;height:16px;font-size:12.500px">癈</div>
<svg class="a" style="left:217.1px;top:259.8px;" width="15" height="15" viewBox="0 0 16 16"><rect x="1" y="1" width="14" height="14" fill="#2f6b3f"/><path d="M2.500 0v16M4.500 0v16M6.500 0v16M8.500 0v16M10.500 0v16M12.500 0v16M0 2.500h16M0 4.500h16M0 6.500h16M0 8.500h16M0 10.500h16M0 12.500h16" stroke="#8a7a3a" stroke-width=".6" stroke-dasharray="1 14" /><rect x=".5" y=".5" width="15" height="15" fill="none" stroke="#3f7a4c" stroke-width="1" stroke-dasharray="1 1"/><rect x="1.500" y="1.500" width="13" height="13" fill="#2f6b3f"/><rect x="4" y="4" width="8" height="8" fill="#dfe3e1"/><rect x="4" y="4" width="8" height="8" fill="none" stroke="#b8c4bc" stroke-width=".8"/></svg>
<div class="t" style="left:234.8px;top:260px;line-height:16px;height:16px;font-size:11.800px;transform:scaleX(0.9449);transform-origin:0 50%">CPU IA Cores</div>
<div class="t" style="left:403px;top:260px;line-height:16px;height:16px;font-size:11.800px;transform:scaleX(0.9142);transform-origin:0 50%">77</div>
<div class="t" style="left:418.3px;top:260px;line-height:16px;height:16px;font-size:12.500px">癈</div>
<svg class="a" style="left:217.1px;top:278.8px;" width="15" height="15" viewBox="0 0 16 16"><rect x="0" y="1" width="15" height="9.500" fill="#2f8fe0"/><rect x="1" y="2" width="13" height="7.500" fill="#5ab4f3"/><rect x="6.500" y="7.500" width="9" height="6" fill="#2f7d46"/><rect x="8" y="9" width="4" height="3" fill="#223"/><path d="M7.500 14.200h7" stroke="#e0a020" stroke-width="1.400"/><path d="M3 10.500h4v2h-4z" fill="#888"/></svg>
<div class="t" style="left:234.8px;top:279px;line-height:16px;height:16px;font-size:11.800px;transform:scaleX(0.9163);transform-origin:0 50%">CPU GT Cores</div>
<div class="t" style="left:403px;top:279px;line-height:16px;height:16px;font-size:11.800px;transform:scaleX(0.9142);transform-origin:0 50%">62</div>
<div class="t" style="left:418.3px;top:279px;line-height:16px;height:16px;font-size:12.500px">癈</div>
<svg class="a" style="left:217.1px;top:297.8px;" width="15" height="15" viewBox="0 0 16 16"><rect x="1" y="1" width="14" height="14" fill="#2f6b3f"/><path d="M2.500 0v16M4.500 0v16M6.500 0v16M8.500 0v16M10.500 0v16M12.500 0v16M0 2.500h16M0 4.500h16M0 6.500h16M0 8.500h16M0 10.500h16M0 12.500h16" stroke="#8a7a3a" stroke-width=".6" stroke-dasharray="1 14" /><rect x=".5" y=".5" width="15" height="15" fill="none" stroke="#3f7a4c" stroke-width="1" stroke-dasharray="1 1"/><rect x="1.500" y="1.500" width="13" height="13" fill="#2f6b3f"/><rect x="4" y="4" width="8" height="8" fill="#dfe3e1"/><rect x="4" y="4" width="8" height="8" fill="none" stroke="#b8c4bc" stroke-width=".8"/></svg>
<div class="t" style="left:234.8px;top:298px;line-height:16px;height:16px;font-size:11.800px;transform:scaleX(0.9696);transform-origin:0 50%">CPU #1 / Core #1</div>
<div class="t" style="left:403px;top:298px;line-height:16px;height:16px;font-size:11.800px;transform:scaleX(0.9142);transform-origin:0 50%">72</div>
<div class="t" style="left:418.3px;top:298px;line-height:16px;height:16px;font-size:12.500px">癈</div>
<svg class="a" style="left:217.1px;top:316.8px;" width="15" height="15" viewBox="0 0 16 16"><rect x="1" y="1" width="14" height="14" fill="#2f6b3f"/><path d="M2.500 0v16M4.500 0v16M6.500 0v16M8.500 0v16M10.500 0v16M12.500 0v16M0 2.500h16M0 4.500h16M0 6.500h16M0 8.500h16M0 10.500h16M0 12.500h16" stroke="#8a7a3a" stroke-width=".6" stroke-dasharray="1 14" /><rect x=".5" y=".5" width="15" height="15" fill="none" stroke="#3f7a4c" stroke-width="1" stroke-dasharray="1 1"/><rect x="1.500" y="1.500" width="13" height="13" fill="#2f6b3f"/><rect x="4" y="4" width="8" height="8" fill="#dfe3e1"/><rect x="4" y="4" width="8" height="8" fill="none" stroke="#b8c4bc" stroke-width=".8"/></svg>
<div class="t" style="left:234.8px;top:317px;line-height:16px;height:16px;font-size:11.800px;transform:scaleX(0.9696);transform-origin:0 50%">CPU #1 / Core #2</div>
<div class="t" style="left:403px;top:317px;line-height:16px;height:16px;font-size:11.800px;transform:scaleX(0.9142);transform-origin:0 50%">71</div>
<div class="t" style="left:418.3px;top:317px;line-height:16px;height:16px;font-size:12.500px">癈</div>
<svg class="a" style="left:217.1px;top:335.8px;" width="15" height="15" viewBox="0 0 16 16"><rect x="1" y="1" width="14" height="14" fill="#2f6b3f"/><path d="M2.500 0v16M4.500 0v16M6.500 0v16M8.500 0v16M10.500 0v16M12.500 0v16M0 2.500h16M0 4.500h16M0 6.500h16M0 8.500h16M0 10.500h16M0 12.500h16" stroke="#8a7a3a" stroke-width=".6" stroke-dasharray="1 14" /><rect x=".5" y=".5" width="15" height="15" fill="none" stroke="#3f7a4c" stroke-width="1" stroke-dasharray="1 1"/><rect x="1.500" y="1.500" width="13" height="13" fill="#2f6b3f"/><rect x="4" y="4" width="8" height="8" fill="#dfe3e1"/><rect x="4" y="4" width="8" height="8" fill="none" stroke="#b8c4bc" stroke-width=".8"/></svg>
<div class="t" style="left:234.8px;top:336px;line-height:16px;height:16px;font-size:11.800px;transform:scaleX(0.9696);transform-origin:0 50%">CPU #1 / Core #3</div>
<div class="t" style="left:403px;top:336px;line-height:16px;height:16px;font-size:11.800px;transform:scaleX(0.9142);transform-origin:0 50%">71</div>
<div class="t" style="left:418.3px;top:336px;line-height:16px;height:16px;font-size:12.500px">癈</div>
<svg class="a" style="left:217.1px;top:354.8px;" width="15" height="15" viewBox="0 0 16 16"><rect x="1" y="1" width="14" height="14" fill="#2f6b3f"/><path d="M2.500 0v16M4.500 0v16M6.500 0v16M8.500 0v16M10.500 0v16M12.500 0v16M0 2.500h16M0 4.500h16M0 6.500h16M0 8.500h16M0 10.500h16M0 12.500h16" stroke="#8a7a3a" stroke-width=".6" stroke-dasharray="1 14" /><rect x=".5" y=".5" width="15" height="15" fill="none" stroke="#3f7a4c" stroke-width="1" stroke-dasharray="1 1"/><rect x="1.500" y="1.500" width="13" height="13" fill="#2f6b3f"/><rect x="4" y="4" width="8" height="8" fill="#dfe3e1"/><rect x="4" y="4" width="8" height="8" fill="none" stroke="#b8c4bc" stroke-width=".8"/></svg>
<div class="t" style="left:234.8px;top:355px;line-height:16px;height:16px;font-size:11.800px;transform:scaleX(0.9696);transform-origin:0 50%">CPU #1 / Core #4</div>
<div class="t" style="left:403px;top:355px;line-height:16px;height:16px;font-size:11.800px;transform:scaleX(0.9142);transform-origin:0 50%">70</div>
<div class="t" style="left:418.3px;top:355px;line-height:16px;height:16px;font-size:12.500px">癈</div>
<svg class="a" style="left:217.1px;top:373.8px;" width="15" height="15" viewBox="0 0 16 16"><rect x="1" y="1" width="14" height="14" fill="#2f6b3f"/><path d="M2.500 0v16M4.500 0v16M6.500 0v16M8.500 0v16M10.500 0v16M12.500 0v16M0 2.500h16M0 4.500h16M0 6.500h16M0 8.500h16M0 10.500h16M0 12.500h16" stroke="#8a7a3a" stroke-width=".6" stroke-dasharray="1 14" /><rect x=".5" y=".5" width="15" height="15" fill="none" stroke="#3f7a4c" stroke-width="1" stroke-dasharray="1 1"/><rect x="1.500" y="1.500" width="13" height="13" fill="#2f6b3f"/><rect x="4" y="4" width="8" height="8" fill="#dfe3e1"/><rect x="4" y="4" width="8" height="8" fill="none" stroke="#b8c4bc" stroke-width=".8"/></svg>
<div class="t" style="left:234.8px;top:374px;line-height:16px;height:16px;font-size:11.800px;transform:scaleX(0.9696);transform-origin:0 50%">CPU #1 / Core #5</div>
<div class="t" style="left:403px;top:374px;line-height:16px;height:16px;font-size:11.800px;transform:scaleX(0.9142);transform-origin:0 50%">70</div>
<div class="t" style="left:418.3px;top:374px;line-height:16px;height:16px;font-size:12.500px">癈</div>
<svg class="a" style="left:217.1px;top:392.8px;" width="15" height="15" viewBox="0 0 16 16"><rect x="1" y="1" width="14" height="14" fill="#2f6b3f"/><path d="M2.500 0v16M4.500 0v16M6.500 0v16M8.500 0v16M10.500 0v16M12.500 0v16M0 2.500h16M0 4.500h16M0 6.500h16M0 8.500h16M0 10.500h16M0 12.500h16" stroke="#8a7a3a" stroke-width=".6" stroke-dasharray="1 14" /><rect x=".5" y=".5" width="15" height="15" fill="none" stroke="#3f7a4c" stroke-width="1" stroke-dasharray="1 1"/><rect x="1.500" y="1.500" width="13" height="13" fill="#2f6b3f"/><rect x="4" y="4" width="8" height="8" fill="#dfe3e1"/><rect x="4" y="4" width="8" height="8" fill="none" stroke="#b8c4bc" stroke-width=".8"/></svg>
<div class="t" style="left:234.8px;top:393px;line-height:16px;height:16px;font-size:11.800px;transform:scaleX(0.9696);transform-origin:0 50%">CPU #1 / Core #6</div>
<div class="t" style="left:403px;top:393px;line-height:16px;height:16px;font-size:11.800px;transform:scaleX(0.9142);transform-origin:0 50%">70</div>
<div class="t" style="left:418.3px;top:393px;line-height:16px;height:16px;font-size:12.500px">癈</div>
<svg class="a" style="left:217.1px;top:411.8px;" width="15" height="15" viewBox="0 0 16 16"><rect x="1" y="1" width="14" height="14" fill="#2f6b3f"/><path d="M2.500 0v16M4.500 0v16M6.500 0v16M8.500 0v16M10.500 0v16M12.500 0v16M0 2.500h16M0 4.500h16M0 6.500h16M0 8.500h16M0 10.500h16M0 12.500h16" stroke="#8a7a3a" stroke-width=".6" stroke-dasharray="1 14" /><rect x=".5" y=".5" width="15" height="15" fill="none" stroke="#3f7a4c" stroke-width="1" stroke-dasharray="1 1"/><rect x="1.500" y="1.500" width="13" height="13" fill="#2f6b3f"/><rect x="4" y="4" width="8" height="8" fill="#dfe3e1"/><rect x="4" y="4" width="8" height="8" fill="none" stroke="#b8c4bc" stroke-width=".8"/></svg>
<div class="t" style="left:234.8px;top:412px;line-height:16px;height:16px;font-size:11.800px;transform:scaleX(0.9696);transform-origin:0 50%">CPU #1 / Core #7</div>
<div class="t" style="left:403px;top:412px;line-height:16px;height:16px;font-size:11.800px;transform:scaleX(0.9142);transform-origin:0 50%">72</div>
<div class="t" style="left:418.3px;top:412px;line-height:16px;height:16px;font-size:12.500px">癈</div>
<svg class="a" style="left:217.1px;top:430.8px;" width="15" height="15" viewBox="0 0 16 16"><rect x="1" y="1" width="14" height="14" fill="#2f6b3f"/><path d="M2.500 0v16M4.500 0v16M6.500 0v16M8.500 0v16M10.500 0v16M12.500 0v16M0 2.500h16M0 4.500h16M0 6.500h16M0 8.500h16M0 10.500h16M0 12.500h16" stroke="#8a7a3a" stroke-width=".6" stroke-dasharray="1 14" /><rect x=".5" y=".5" width="15" height="15" fill="none" stroke="#3f7a4c" stroke-width="1" stroke-dasharray="1 1"/><rect x="1.500" y="1.500" width="13" height="13" fill="#2f6b3f"/><rect x="4" y="4" width="8" height="8" fill="#dfe3e1"/><rect x="4" y="4" width="8" height="8" fill="none" stroke="#b8c4bc" stroke-width=".8"/></svg>
<div class="t" style="left:234.8px;top:431px;line-height:16px;height:16px;font-size:11.800px;transform:scaleX(0.9696);transform-origin:0 50%">CPU #1 / Core #8</div>
<div class="t" style="left:403px;top:431px;line-height:16px;height:16px;font-size:11.800px;transform:scaleX(0.9142);transform-origin:0 50%">73</div>
<div class="t" style="left:418.3px;top:431px;line-height:16px;height:16px;font-size:12.500px">癈</div>
<svg class="a" style="left:217.1px;top:449.8px;" width="15" height="15" viewBox="0 0 16 16"><rect x="1" y="1" width="14" height="14" fill="#2f6b3f"/><path d="M2.500 0v16M4.500 0v16M6.500 0v16M8.500 0v16M10.500 0v16M12.500 0v16M0 2.500h16M0 4.500h16M0 6.500h16M0 8.500h16M0 10.500h16M0 12.500h16" stroke="#8a7a3a" stroke-width=".6" stroke-dasharray="1 14" /><rect x=".5" y=".5" width="15" height="15" fill="none" stroke="#3f7a4c" stroke-width="1" stroke-dasharray="1 1"/><rect x="1.500" y="1.500" width="13" height="13" fill="#2f6b3f"/><rect x="4" y="4" width="8" height="8" fill="#dfe3e1"/><rect x="4" y="4" width="8" height="8" fill="none" stroke="#b8c4bc" stroke-width=".8"/></svg>
<div class="t" style="left:234.8px;top:450px;line-height:16px;height:16px;font-size:11.800px;transform:scaleX(0.9696);transform-origin:0 50%">CPU #1 / Core #9</div>
<div class="t" style="left:403px;top:450px;line-height:16px;height:16px;font-size:11.800px;transform:scaleX(0.9142);transform-origin:0 50%">72</div>
<div class="t" style="left:418.3px;top:450px;line-height:16px;height:16px;font-size:12.500px">癈</div>
<svg class="a" style="left:217.1px;top:468.8px;" width="15" height="15" viewBox="0 0 16 16"><rect x="1" y="1" width="14" height="14" fill="#2f6b3f"/><path d="M2.500 0v16M4.500 0v16M6.500 0v16M8.500 0v16M10.500 0v16M12.500 0v16M0 2.500h16M0 4.500h16M0 6.500h16M0 8.500h16M0 10.500h16M0 12.500h16" stroke="#8a7a3a" stroke-width=".6" stroke-dasharray="1 14" /><rect x=".5" y=".5" width="15" height="15" fill="none" stroke="#3f7a4c" stroke-width="1" stroke-dasharray="1 1"/><rect x="1.500" y="1.500" width="13" height="13" fill="#2f6b3f"/><rect x="4" y="4" width="8" height="8" fill="#dfe3e1"/><rect x="4" y="4" width="8" height="8" fill="none" stroke="#b8c4bc" stroke-width=".8"/></svg>
<div class="t" style="left:234.8px;top:469px;line-height:16px;height:16px;font-size:11.800px;transform:scaleX(0.9679);transform-origin:0 50%">CPU #1 / Core #10</div>
<div class="t" style="left:403px;top:469px;line-height:16px;height:16px;font-size:11.800px;transform:scaleX(0.9142);transform-origin:0 50%">68</div>
<div class="t" style="left:418.3px;top:469px;line-height:16px;height:16px;font-size:12.500px">癈</div>
<svg class="a" style="left:217.1px;top:487.8px;" width="15" height="15" viewBox="0 0 16 16"><rect x="1" y="1" width="14" height="14" fill="#2f6b3f"/><path d="M2.500 0v16M4.500 0v16M6.500 0v16M8.500 0v16M10.500 0v16M12.500 0v16M0 2.500h16M0 4.500h16M0 6.500h16M0 8.500h16M0 10.500h16M0 12.500h16" stroke="#8a7a3a" stroke-width=".6" stroke-dasharray="1 14" /><rect x=".5" y=".5" width="15" height="15" fill="none" stroke="#3f7a4c" stroke-width="1" stroke-dasharray="1 1"/><rect x="1.500" y="1.500" width="13" height="13" fill="#2f6b3f"/><rect x="4" y="4" width="8" height="8" fill="#dfe3e1"/><rect x="4" y="4" width="8" height="8" fill="none" stroke="#b8c4bc" stroke-width=".8"/></svg>
<div class="t" style="left:234.8px;top:488px;line-height:16px;height:16px;font-size:11.800px;transform:scaleX(0.9765);transform-origin:0 50%">CPU #1 / Core #11</div>
<div class="t" style="left:403px;top:488px;line-height:16px;height:16px;font-size:11.800px;transform:scaleX(0.9142);transform-origin:0 50%">69</div>
<div class="t" style="left:418.3px;top:488px;line-height:16px;height:16px;font-size:12.500px">癈</div>
<svg class="a" style="left:217.1px;top:506.8px;" width="15" height="15" viewBox="0 0 16 16"><rect x="1" y="1" width="14" height="14" fill="#2f6b3f"/><path d="M2.500 0v16M4.500 0v16M6.500 0v16M8.500 0v16M10.500 0v16M12.500 0v16M0 2.500h16M0 4.500h16M0 6.500h16M0 8.500h16M0 10.500h16M0 12.500h16" stroke="#8a7a3a" stroke-width=".6" stroke-dasharray="1 14" /><rect x=".5" y=".5" width="15" height="15" fill="none" stroke="#3f7a4c" stroke-width="1" stroke-dasharray="1 1"/><rect x="1.500" y="1.500" width="13" height="13" fill="#2f6b3f"/><rect x="4" y="4" width="8" height="8" fill="#dfe3e1"/><rect x="4" y="4" width="8" height="8" fill="none" stroke="#b8c4bc" stroke-width=".8"/></svg>
<div class="t" style="left:234.8px;top:507px;line-height:16px;height:16px;font-size:11.800px;transform:scaleX(0.9679);transform-origin:0 50%">CPU #1 / Core #12</div>
<div class="t" style="left:403px;top:507px;line-height:16px;height:16px;font-size:11.800px;transform:scaleX(0.9142);transform-origin:0 50%">72</div>
<div class="t" style="left:418.3px;top:507px;line-height:16px;height:16px;font-size:12.500px">癈</div>
<svg class="a" style="left:217.1px;top:525.8px;" width="15" height="15" viewBox="0 0 16 16"><rect x="0" y="1" width="16" height="10.500" fill="#2f8fe0"/><rect x="1" y="2" width="14" height="8.500" fill="#5ab4f3"/><path d="M5.500 11.500h5l1 2.500h-7z" fill="#bbb"/><rect x="2" y="14" width="12" height="1.500" fill="#ccc"/></svg>
<div class="t" style="left:234.8px;top:526px;line-height:16px;height:16px;font-size:11.800px;transform:scaleX(0.9688);transform-origin:0 50%">Aux</div>
<div class="t" style="left:403px;top:526px;line-height:16px;height:16px;font-size:11.800px;transform:scaleX(0.9142);transform-origin:0 50%">75</div>
<div class="t" style="left:418.3px;top:526px;line-height:16px;height:16px;font-size:12.500px">癈</div>
<svg class="a" style="left:217.1px;top:544.8px;" width="15" height="15" viewBox="0 0 16 16"><path d="M2 5h12l2 3.500v4h-16v-4z" fill="#cfcfcf"/><rect x="0" y="8.500" width="16" height="4" fill="#4a4a4a"/><rect x="12" y="10" width="2.200" height="1.200" fill="#6fdc5a"/></svg>
<div class="t" style="left:234.8px;top:545px;line-height:16px;height:16px;font-size:11.800px;transform:scaleX(0.9563);transform-origin:0 50%">Wdxsky W31-256G</div>
<div class="t" style="left:403px;top:545px;line-height:16px;height:16px;font-size:11.800px;transform:scaleX(0.9142);transform-origin:0 50%">40</div>
<div class="t" style="left:418.3px;top:545px;line-height:16px;height:16px;font-size:12.500px">癈</div>
<svg class="a" style="left:201.2px;top:582.8px;" width="15" height="15" viewBox="0 0 16 16"><rect x="0" y="0" width="16" height="16" rx="2" fill="#3a9ad8"/><g fill="#d8f0ff"><ellipse cx="8" cy="4" rx="2" ry="3.200"/><ellipse cx="8" cy="12" rx="2" ry="3.200"/><ellipse cx="4" cy="8" rx="3.200" ry="2"/><ellipse cx="12" cy="8" rx="3.200" ry="2"/><ellipse cx="5" cy="5" rx="1.600" ry="2.600" transform="rotate(-45 5 5)"/><ellipse cx="11" cy="11" rx="1.600" ry="2.600" transform="rotate(-45 11 11)"/></g><circle cx="8" cy="8" r="1.800" fill="#1f6fb0"/></svg>
<div class="t" style="left:218.6px;top:583px;line-height:16px;height:16px;font-size:11.800px;transform:scaleX(0.9888);transform-origin:0 50%">Cooling Fans</div>
<svg class="a" style="left:217.1px;top:601.8px;" width="15" height="15" viewBox="0 0 16 16"><rect x="1" y="1" width="14" height="14" fill="#2f6b3f"/><path d="M2.500 0v16M4.500 0v16M6.500 0v16M8.500 0v16M10.500 0v16M12.500 0v16M0 2.500h16M0 4.500h16M0 6.500h16M0 8.500h16M0 10.500h16M0 12.500h16" stroke="#8a7a3a" stroke-width=".6" stroke-dasharray="1 14" /><rect x=".5" y=".5" width="15" height="15" fill="none" stroke="#3f7a4c" stroke-width="1" stroke-dasharray="1 1"/><rect x="1.500" y="1.500" width="13" height="13" fill="#2f6b3f"/><rect x="4" y="4" width="8" height="8" fill="#dfe3e1"/><rect x="4" y="4" width="8" height="8" fill="none" stroke="#b8c4bc" stroke-width=".8"/></svg>
<div class="t" style="left:234.8px;top:602px;line-height:16px;height:16px;font-size:11.800px;transform:scaleX(0.8790);transform-origin:0 50%">CPU</div>
<div class="t" style="left:403px;top:602px;line-height:16px;height:16px;font-size:11.800px;transform:scaleX(0.9255);transform-origin:0 50%">2689 RPM</div>
<svg class="a" style="left:201.2px;top:639.8px;" width="15" height="15" viewBox="0 0 16 16"><circle cx="8" cy="8.300" r="6.200" fill="#fff" stroke="#3c3c3c" stroke-width="1.100"/><path d="M10.800 .6 5.300 8.800h3.100L6 15.800 11.600 6.900H8.400z" fill="#ea7a1c"/></svg>
<div class="t" style="left:218.6px;top:640px;line-height:16px;height:16px;font-size:11.800px;transform:scaleX(0.9556);transform-origin:0 50%">Voltage Values</div>
<svg class="a" style="left:217.1px;top:658.8px;" width="15" height="15" viewBox="0 0 16 16"><rect x="1" y="1" width="14" height="14" fill="#2f6b3f"/><path d="M2.500 0v16M4.500 0v16M6.500 0v16M8.500 0v16M10.500 0v16M12.500 0v16M0 2.500h16M0 4.500h16M0 6.500h16M0 8.500h16M0 10.500h16M0 12.500h16" stroke="#8a7a3a" stroke-width=".6" stroke-dasharray="1 14" /><rect x=".5" y=".5" width="15" height="15" fill="none" stroke="#3f7a4c" stroke-width="1" stroke-dasharray="1 1"/><rect x="1.500" y="1.500" width="13" height="13" fill="#2f6b3f"/><rect x="4" y="4" width="8" height="8" fill="#dfe3e1"/><rect x="4" y="4" width="8" height="8" fill="none" stroke="#b8c4bc" stroke-width=".8"/></svg>
<div class="t" style="left:234.8px;top:659px;line-height:16px;height:16px;font-size:11.800px;transform:scaleX(0.9355);transform-origin:0 50%">CPU Core</div>
<div class="t" style="left:403px;top:659px;line-height:16px;height:16px;font-size:11.800px;transform:scaleX(0.8997);transform-origin:0 50%">1.092 V</div>
<svg class="a" style="left:217.1px;top:677.8px;" width="15" height="15" viewBox="0 0 16 16"><rect x="1" y="1" width="14" height="14" fill="#2f6b3f"/><path d="M2.500 0v16M4.500 0v16M6.500 0v16M8.500 0v16M10.500 0v16M12.500 0v16M0 2.500h16M0 4.500h16M0 6.500h16M0 8.500h16M0 10.500h16M0 12.500h16" stroke="#8a7a3a" stroke-width=".6" stroke-dasharray="1 14" /><rect x=".5" y=".5" width="15" height="15" fill="none" stroke="#3f7a4c" stroke-width="1" stroke-dasharray="1 1"/><rect x="1.500" y="1.500" width="13" height="13" fill="#2f6b3f"/><rect x="4" y="4" width="8" height="8" fill="#dfe3e1"/><rect x="4" y="4" width="8" height="8" fill="none" stroke="#b8c4bc" stroke-width=".8"/></svg>
<div class="t" style="left:234.8px;top:678px;line-height:16px;height:16px;font-size:11.800px;transform:scaleX(0.9005);transform-origin:0 50%">CPU VID</div>
<div class="t" style="left:403px;top:678px;line-height:16px;height:16px;font-size:11.800px;transform:scaleX(0.8997);transform-origin:0 50%">1.002 V</div>
<svg class="a" style="left:217.1px;top:696.8px;" width="15" height="15" viewBox="0 0 16 16"><circle cx="8" cy="8.300" r="6.200" fill="#fff" stroke="#3c3c3c" stroke-width="1.100"/><path d="M10.800 .6 5.300 8.800h3.100L6 15.800 11.600 6.900H8.400z" fill="#ea7a1c"/></svg>
<div class="t" style="left:234.8px;top:697px;line-height:16px;height:16px;font-size:11.800px;transform:scaleX(0.9349);transform-origin:0 50%">+3.3 V</div>
<div class="t" style="left:403px;top:697px;line-height:16px;height:16px;font-size:11.800px;transform:scaleX(0.8997);transform-origin:0 50%">3.782 V</div></div></div>
<div class="win" style="left:6px;top:240px;width:776px;height:592px;"><div class="a" style="left:0;top:0;width:776px;height:592px;overflow:hidden"><div class="a" style="left:0px;top:30px;width:776px;height:562px;background:#f0f0f0"></div>
<svg class="a" style="left:9.5px;top:5.5px;" width="14" height="17" viewBox="0 0 14 17"><defs><linearGradient id="fl1" x1="0" y1="0" x2="0" y2="1"><stop offset="0" stop-color="#f0531c"/><stop offset=".6" stop-color="#f88a1e"/><stop offset="1" stop-color="#ffd21f"/></linearGradient></defs><path d="M4 0.500c.5 3 3 4 3.300 7 1-1.500 1.700-3.200 1.500-4.500 1.200 1 1.700 2.500 1.700 4 .8-.8 1.600-2 1.700-3.500 1.500 2.500 1.800 5 1.300 7.500-.6 3-2.800 5.500-6.500 5.500-3.500 0-6-2-6.500-5-.4-2 .2-4 1.300-5.500 0 1.500.5 2.500 1.200 3.200-.5-3 0-6 1-8.700z" fill="url(#fl1)"/><path d="M6.800 16c-2 0-3.300-1.200-3.300-3 0-1.500 1-2.500 1.800-3.500.3 1 .8 1.500 1.500 1.800.2-1 .8-1.800 1.500-2.300 0 1.500 1.800 2.300 1.800 4 0 1.800-1.300 3-3.300 3z" fill="#ffe23a"/></svg>
<div class="t" style="left:29.8px;top:6.8px;line-height:16px;height:16px;font-size:12.85px;color:#999">System Stability Test - AIDA64</div>
<svg class="a" style="left:657px;top:9px;" width="10" height="10" viewBox="0 0 10 10"><path d="M0 5.500h10" stroke="#8f8f8f" stroke-width="1" fill="none"/></svg>
<svg class="a" style="left:702px;top:9px;" width="10" height="10" viewBox="0 0 10 10"><rect x=".5" y=".5" width="9" height="9" stroke="#8f8f8f" stroke-width="1" fill="none"/></svg>
<svg class="a" style="left:748px;top:9px;" width="10" height="10" viewBox="0 0 10 10"><path d="M0 0 10 10M10 0 0 10" stroke="#8f8f8f" stroke-width="1.050" fill="none"/></svg>
<div class="a" style="left:7px;top:39.5px;width:759.5px;height:515px;background:#fff;border:1px solid #dcdcdc"></div>
<svg class="a" style="left:19.5px;top:52.5px;" width="15" height="15" viewBox="0 0 16 16"><rect x="1" y="1" width="14" height="14" fill="#2f6b3f"/><path d="M2.500 0v16M4.500 0v16M6.500 0v16M8.500 0v16M10.500 0v16M12.500 0v16M0 2.500h16M0 4.500h16M0 6.500h16M0 8.500h16M0 10.500h16M0 12.500h16" stroke="#8a7a3a" stroke-width=".6" stroke-dasharray="1 14" /><rect x=".5" y=".5" width="15" height="15" fill="none" stroke="#3f7a4c" stroke-width="1" stroke-dasharray="1 1"/><rect x="1.500" y="1.500" width="13" height="13" fill="#2f6b3f"/><rect x="4" y="4" width="8" height="8" fill="#dfe3e1"/><rect x="4" y="4" width="8" height="8" fill="none" stroke="#b8c4bc" stroke-width=".8"/></svg>
<svg class="a" style="left:43px;top:54.7px;" width="13" height="13" viewBox="0 0 13 13"><rect x=".5" y=".5" width="12" height="12" fill="#fff" stroke="#333" stroke-width="1"/><path d="M2.800 6.700 5.300 9.300 10.300 3.600" fill="none" stroke="#222" stroke-width="1.200"/></svg>
<div class="t" style="left:59.2px;top:54px;line-height:16px;height:16px;font-size:11.800px;transform:scaleX(0.8988);transform-origin:0 50%">Stress CPU</div>
<svg class="a" style="left:19.5px;top:72.5px;" width="15" height="15" viewBox="0 0 16 16"><rect x="1" y="1" width="14" height="14" fill="#2f6b3f"/><path d="M2.500 0v16M4.500 0v16M6.500 0v16M8.500 0v16M10.500 0v16M12.500 0v16M0 2.500h16M0 4.500h16M0 6.500h16M0 8.500h16M0 10.500h16M0 12.500h16" stroke="#8a7a3a" stroke-width=".6" stroke-dasharray="1 14" /><rect x=".5" y=".5" width="15" height="15" fill="none" stroke="#3f7a4c" stroke-width="1" stroke-dasharray="1 1"/><rect x="1.500" y="1.500" width="13" height="13" fill="#2f6b3f"/><rect x="4" y="4" width="8" height="8" fill="#dfe3e1"/><rect x="4" y="4" width="8" height="8" fill="none" stroke="#b8c4bc" stroke-width=".8"/><rect x="3" y="3" width="10" height="10" fill="#e8ece9"/><text x="8" y="11.500" font-size="9" font-family="Liberation Sans" font-weight="bold" text-anchor="middle" fill="#222">%</text></svg>
<svg class="a" style="left:43px;top:74.7px;" width="13" height="13" viewBox="0 0 13 13"><rect x=".5" y=".5" width="12" height="12" fill="#fff" stroke="#333" stroke-width="1"/><path d="M2.800 6.700 5.300 9.300 10.300 3.600" fill="none" stroke="#222" stroke-width="1.200"/></svg>
<div class="t" style="left:59.2px;top:74px;line-height:16px;height:16px;font-size:11.800px;transform:scaleX(0.8836);transform-origin:0 50%">Stress FPU</div>
<svg class="a" style="left:20px;top:93px;" width="14" height="16" viewBox="0 0 14 16"><rect x="2" y="1" width="10" height="14" fill="#3a3a3a"/><rect x="3.500" y="3" width="7" height="10" fill="#555"/><path d="M0 2.500h2M0 5.500h2M0 8.500h2M0 11.500h2M0 13.500h2M12 2.500h2M12 5.500h2M12 8.500h2M12 11.500h2M12 13.500h2" stroke="#777" stroke-width="1.200"/></svg>
<svg class="a" style="left:43px;top:94.7px;" width="13" height="13" viewBox="0 0 13 13"><rect x=".5" y=".5" width="12" height="12" fill="#fff" stroke="#333" stroke-width="1"/><path d="M2.800 6.700 5.300 9.300 10.300 3.600" fill="none" stroke="#222" stroke-width="1.200"/></svg>
<div class="t" style="left:59.2px;top:94px;line-height:16px;height:16px;font-size:11.800px;transform:scaleX(0.9354);transform-origin:0 50%">Stress cache</div>
<svg class="a" style="left:19px;top:113px;" width="16" height="10" viewBox="0 0 16 10"><rect x="0" y="0" width="16" height="9" fill="#2f7d46"/><rect x="1.500" y="1.500" width="2.500" height="5" fill="#222"/><rect x="5" y="1.500" width="2.500" height="5" fill="#222"/><rect x="8.500" y="1.500" width="2.500" height="5" fill="#222"/><rect x="12" y="1.500" width="2.500" height="5" fill="#222"/><path d="M0 9.500h16" stroke="#c9a83a" stroke-width="1" stroke-dasharray="1 1"/></svg>
<svg class="a" style="left:43px;top:114.7px;" width="13" height="13" viewBox="0 0 13 13"><rect x=".5" y=".5" width="12" height="12" fill="#fff" stroke="#333" stroke-width="1"/><path d="M2.800 6.700 5.300 9.300 10.300 3.600" fill="none" stroke="#222" stroke-width="1.200"/></svg>
<div class="t" style="left:59.2px;top:114px;line-height:16px;height:16px;font-size:11.800px;transform:scaleX(0.9793);transform-origin:0 50%">Stress system memory</div>
<svg class="a" style="left:20px;top:137px;" width="14" height="8" viewBox="0 0 14 8"><path d="M2 0h10l2 3.500v4h-14v-4z" fill="#cfcfcf"/><rect x="0" y="3.500" width="14" height="4" fill="#4a4a4a"/><rect x="10.500" y="5" width="2" height="1.200" fill="#6fdc5a"/></svg>
<svg class="a" style="left:43px;top:134.7px;" width="13" height="13" viewBox="0 0 13 13"><rect x=".5" y=".5" width="12" height="12" fill="#fff" stroke="#333" stroke-width="1"/></svg>
<div class="t" style="left:59.2px;top:134px;line-height:16px;height:16px;font-size:11.800px;transform:scaleX(0.9512);transform-origin:0 50%">Stress local disks</div>
<svg class="a" style="left:19px;top:153.5px;" width="16" height="14" viewBox="0 0 16 14"><rect x="0" y="0" width="15" height="9.500" fill="#2f8fe0"/><rect x="1" y="1" width="13" height="7.500" fill="#5ab4f3"/><rect x="6.500" y="6" width="9" height="6" fill="#2f7d46"/><rect x="8" y="7.500" width="4" height="3" fill="#223"/><path d="M7.500 12.700h7" stroke="#e0a020" stroke-width="1.400"/><path d="M3 9.500h5v2h-5z" fill="#888"/></svg>
<svg class="a" style="left:43px;top:154.7px;" width="13" height="13" viewBox="0 0 13 13"><rect x=".5" y=".5" width="12" height="12" fill="#fff" stroke="#333" stroke-width="1"/></svg>
<div class="t" style="left:59.2px;top:154px;line-height:16px;height:16px;font-size:11.800px;transform:scaleX(0.8955);transform-origin:0 50%">Stress GPU(s)</div>
<div class="a" style="left:183px;top:53px;width:458px;height:119.5px;background:#fff;border:1px solid #7a7a7a"></div>
<div class="a" style="left:189px;top:79.5px;width:432.5px;height:18px;background:#f0f0f0"></div>
<div class="a" style="left:334.5px;top:54px;width:1px;height:117.5px;background:#ededed"></div>
<div class="a" style="left:621px;top:54px;width:1px;height:117.5px;background:#ededed"></div>
<div class="a" style="left:184px;top:116px;width:456px;height:1px;background:#f0f0f0"></div>
<div class="a" style="left:184px;top:135px;width:456px;height:1px;background:#f0f0f0"></div>
<div class="a" style="left:184px;top:154px;width:456px;height:1px;background:#f0f0f0"></div>
<div class="t" style="left:191.5px;top:59px;line-height:16px;height:16px;font-size:11.800px;transform:scaleX(1.0058);transform-origin:0 50%">Date &amp; Time</div>
<div class="t" style="left:341.5px;top:59px;line-height:16px;height:16px;font-size:11.800px;transform:scaleX(0.9341);transform-origin:0 50%">Status</div>
<div class="t" style="left:191.3px;top:81px;line-height:16px;height:16px;font-size:11.800px;transform:scaleX(0.9467);transform-origin:0 50%">2022/12/15 14:23:09</div>
<div class="t" style="left:341.5px;top:81px;line-height:16px;height:16px;font-size:11.800px;transform:scaleX(0.9672);transform-origin:0 50%">Stability Test: Started</div>
<div class="a" style="left:23px;top:201.5px;width:731px;height:300.5px;background:#fff;border-left:1px solid #dcdcdc;border-top:1px solid #dcdcdc"></div>
<div class="a" style="left:109.5px;top:182px;width:80px;height:20px;background:#f0f0f0;border:1px solid #d9d9d9;border-bottom:none"></div>
<div class="t" style="left:114.5px;top:184px;line-height:16px;height:16px;font-size:11.800px;transform:scaleX(0.9816);transform-origin:0 50%">Cooling Fans</div>
<div class="a" style="left:188.5px;top:182px;width:56.75px;height:20px;background:#f0f0f0;border:1px solid #d9d9d9;border-bottom:none"></div>
<div class="t" style="left:195.25px;top:184px;line-height:16px;height:16px;font-size:11.800px;transform:scaleX(0.9553);transform-origin:0 50%">Voltages</div>
<div class="a" style="left:244.25px;top:182px;width:50.75px;height:20px;background:#f0f0f0;border:1px solid #d9d9d9;border-bottom:none"></div>
<div class="t" style="left:251.5px;top:184px;line-height:16px;height:16px;font-size:11.800px;transform:scaleX(0.9530);transform-origin:0 50%">Powers</div>
<div class="a" style="left:294px;top:182px;width:49.25px;height:20px;background:#f0f0f0;border:1px solid #d9d9d9;border-bottom:none"></div>
<div class="t" style="left:301.5px;top:184px;line-height:16px;height:16px;font-size:11.800px;transform:scaleX(0.9673);transform-origin:0 50%">Clocks</div>
<div class="a" style="left:342.25px;top:182px;width:51px;height:20px;background:#f0f0f0;border:1px solid #d9d9d9;border-bottom:none"></div>
<div class="t" style="left:349.5px;top:184px;line-height:16px;height:16px;font-size:11.800px;transform:scaleX(1.0073);transform-origin:0 50%">Unified</div>
<div class="a" style="left:392.25px;top:182px;width:57.25px;height:20px;background:#f0f0f0;border:1px solid #d9d9d9;border-bottom:none"></div>
<div class="t" style="left:399.5px;top:184px;line-height:16px;height:16px;font-size:11.800px;transform:scaleX(0.9584);transform-origin:0 50%">Statistics</div>
<div class="a" style="left:23px;top:179.5px;width:87px;height:23px;background:#fff;border:1px solid #d9d9d9;border-bottom:none"></div>
<div class="t" style="left:31.5px;top:182px;line-height:16px;height:16px;font-size:11.800px;transform:scaleX(0.9772);transform-origin:0 50%">Temperatures</div>
<div class="a" style="left:28.4px;top:220px;width:17.3px;height:122px;background:#e6e6e6;border:1px solid #d8d8d8;border-top:none"></div>
<div class="a" style="left:25.25px;top:210.8px;width:22.5px;height:10px;background:#0078d7"></div>
<div class="a" style="left:49px;top:203px;width:704px;height:147px;background:#000"></div>
<svg class="a" style="left:49px;top:203px;" width="704" height="147" viewBox="0 0 704 147"><path d="M58.5 51.2V117.5M68.5 51.2V117.5M78.5 51.2V117.5M88.5 51.2V117.5M98.5 51.2V117.5M108.5 51.2V117.5M118.5 51.2V117.5M128.5 51.2V117.5M138.5 51.2V117.5M148.5 51.2V117.5M158.5 51.2V117.5M168.5 51.2V117.5M178.5 51.2V117.5M188.5 51.2V117.5M198.5 51.2V117.5M208.5 51.2V117.5M218.5 51.2V117.5M228.5 51.2V117.5M238.5 51.2V117.5M248.5 51.2V117.5M258.5 51.2V117.5M268.5 51.2V117.5M278.5 51.2V117.5M288.5 51.2V117.5M298.5 51.2V117.5M308.5 51.2V117.5M318.5 51.2V117.5M328.5 51.2V117.5M338.5 51.2V117.5M348.5 51.2V117.5M358.5 51.2V117.5M368.5 51.2V117.5M378.5 51.2V117.5M388.5 51.2V117.5M398.5 51.2V117.5M408.5 51.2V117.5M418.5 51.2V117.5M428.5 51.2V117.5M438.5 51.2V117.5M448.5 51.2V117.5M458.5 51.2V117.5M468.5 51.2V117.5M478.5 51.2V117.5M488.5 51.2V117.5M498.5 51.2V117.5M508.5 51.2V117.5M518.5 51.2V117.5M528.5 51.2V117.5M538.5 51.2V117.5M548.5 51.2V117.5M558.5 51.2V117.5M568.5 51.2V117.5M578.5 51.2V117.5M588.5 51.2V117.5M598.5 51.2V117.5M608.5 51.2V117.5M618.5 51.2V117.5M628.5 51.2V117.5M638.5 51.2V117.5M648.5 51.2V117.5M50.0 117.50H654.0M50.0 111.50H654.0M50.0 105.50H654.0M50.0 99.50H654.0M50.0 93.50H654.0M50.0 87.50H654.0M50.0 81.50H654.0M50.0 75.50H654.0M50.0 69.50H654.0M50.0 63.50H654.0M50.0 57.50H654.0" stroke="#1c7628" stroke-width="1" fill="none"/><path d="M52 98.6H654" stroke="#e4ee3c" stroke-width="1.500"/><path d="M52 91.5H654" stroke="#f0c8a0" stroke-width="1"/><polyline points="52.0,68.1 54.8,69.0 57.0,69.7 59.8,68.1 62.5,71.5 64.1,71.9 66.5,69.7 69.5,67.4 72.0,67.5 73.4,71.7 75.8,69.0 77.9,66.8 79.6,70.7 82.1,70.2 84.1,69.8 86.7,70.7 88.9,69.6 91.6,70.4 93.6,70.4 94.9,71.0 97.1,68.3 99.1,69.8 101.8,70.8 103.7,71.7 106.3,71.4 108.9,71.7 111.6,69.1 113.3,72.0 115.9,70.3 117.5,70.3 118.8,66.7 120.6,68.7 122.3,66.2 124.7,71.4 126.4,68.8 128.3,70.7 129.8,73.1 131.5,69.7 134.0,69.3 136.1,69.8 137.8,71.2 140.5,70.9 142.1,67.5 143.8,68.4 146.2,70.3 147.7,70.0 149.4,69.3 151.5,68.6 153.3,73.2 156.4,71.3 158.7,66.7 160.1,71.0 162.8,71.5 164.9,71.6 166.7,69.9 168.2,71.3 171.2,71.5 173.4,66.4 174.8,71.7 177.4,68.4 179.8,71.5 182.4,70.7 183.8,71.9 185.2,70.5 187.8,69.0 189.7,69.4 192.6,70.3 195.4,67.7 197.9,70.4 200.3,73.5 201.8,70.9 204.4,72.5 206.9,70.2 209.7,69.5 211.1,69.7 212.5,68.4 214.7,69.6 216.4,71.7 218.0,67.6 219.6,70.6 222.6,70.0 224.5,69.4 226.9,68.9 229.8,68.4 232.7,71.0 234.9,68.8 237.5,68.4 240.3,71.4 242.1,71.0 244.1,72.0 245.9,66.8 248.0,71.5 249.9,71.7 252.4,69.8 254.9,71.8 256.4,70.2 259.1,70.8 261.8,68.3 263.9,71.6 266.4,70.5 268.9,71.1 270.7,69.3 272.9,71.7 274.7,72.6 277.7,70.0 279.7,69.0 281.2,70.5 283.2,70.2 285.6,68.6 287.9,67.4 290.7,68.4 292.5,68.3 295.1,70.9 298.1,71.4 301.0,68.3 303.3,69.0 305.0,69.2 307.0,71.5 308.9,70.3 311.1,71.7 313.1,69.6 315.1,69.0 317.2,70.3 319.4,69.4 322.4,72.1 323.9,69.0 326.2,66.8 328.6,67.9 330.4,67.4 332.1,66.7 334.3,69.8 336.4,71.4 338.8,71.7 341.0,68.3 342.5,71.5 344.0,69.9 346.9,69.0 348.7,70.1 350.6,68.6 352.9,71.4 355.3,68.5 357.8,68.3 359.5,73.0 361.3,69.2 363.7,73.5 366.1,66.7 367.8,69.0 370.7,73.7 372.7,69.9 375.0,66.7 377.4,67.9 379.8,68.8 382.8,69.6 385.7,70.7 388.6,71.1 391.5,71.3 393.0,71.5 394.5,68.8 396.8,69.3 398.8,69.4 400.3,69.8 403.2,68.4 405.8,69.5 408.0,69.4 410.7,70.1 412.1,67.8 415.0,70.1 416.7,71.1 419.7,68.5 422.1,73.4 424.2,69.1 426.2,70.3 428.3,69.7 430.7,71.6 432.4,72.2 434.3,66.5 435.9,70.0 437.8,73.5 440.7,68.6 443.0,69.1 446.1,68.9 447.9,73.4 450.6,68.9 452.1,68.6 454.7,69.1 456.7,69.2 459.4,70.7 460.8,72.6 463.7,71.6 466.6,69.4 468.3,70.4 470.6,70.4 473.1,69.3 476.1,69.7 477.6,70.9 479.6,71.6 482.1,71.7 483.9,66.5 486.1,68.3 488.4,70.3 490.6,67.5 492.9,69.1 494.9,68.5 497.1,71.2 499.3,69.7 502.3,68.3 504.4,68.6 506.2,67.4 509.1,71.5 511.0,71.7 513.3,69.5 516.0,70.4 518.6,73.7 521.6,71.5 523.7,70.1 525.1,73.5 528.0,71.3 530.4,69.3 532.4,71.4 534.4,71.2 536.5,69.4 538.8,71.6 540.9,67.0 543.7,71.3 546.3,70.9 548.5,68.7 550.9,70.5 553.3,71.3 555.7,69.5 557.3,72.9 560.2,68.7 562.7,71.8 564.7,69.6 566.4,70.8 569.4,71.2 571.8,70.5 573.7,70.6 576.4,68.8 579.1,68.2 581.9,69.1 584.0,70.9 585.9,67.4 587.8,71.9 590.6,73.2 592.6,71.4 594.0,69.5 596.4,68.9 598.2,69.0 600.1,66.5 601.5,72.8 604.2,70.6 605.9,69.5 607.9,73.4 610.0,71.7 612.9,70.2 615.0,73.0 617.9,70.9 620.7,73.7 622.7,70.4 625.3,70.5 627.6,66.8 629.2,71.5 632.1,70.8 633.8,71.6 636.1,70.4 638.9,68.3 641.2,69.0 643.1,70.8 646.0,73.5 648.5,73.5 650.6,69.3 653.2,69.9" fill="none" stroke="#30d838" stroke-width="0.8" stroke-linejoin="round"/><polyline points="52.0,70.6 54.4,68.0 57.0,69.5 59.8,72.4 61.6,71.8 64.3,66.6 66.6,72.0 67.9,71.4 70.7,70.9 73.6,70.5 75.4,68.4 77.2,68.4 79.2,69.2 81.6,69.0 84.4,69.1 86.6,68.6 88.4,71.1 90.0,73.0 92.1,70.0 93.7,70.8 96.4,70.5 98.6,68.9 101.3,70.1 104.1,68.5 106.7,71.5 108.6,71.0 111.2,68.4 113.8,69.1 116.2,70.9 118.9,68.6 121.5,67.2 124.2,70.3 125.7,66.5 127.2,67.1 128.9,69.9 131.1,71.2 133.8,68.8 135.2,72.9 137.3,70.7 139.4,66.4 141.5,70.0 144.1,72.4 145.5,68.9 146.9,70.3 148.4,68.8 150.2,68.3 152.0,72.2 153.3,71.5 154.8,70.4 157.3,69.0 159.6,71.7 162.1,70.1 164.3,70.2 167.0,70.8 168.6,69.6 170.9,70.5 172.7,70.6 174.9,71.5 176.5,69.2 178.3,70.8 180.7,70.6 182.1,71.3 183.6,69.6 185.2,70.4 187.4,71.5 188.8,68.3 190.7,71.5 193.5,71.3 196.1,68.9 198.1,66.5 199.4,72.4 201.2,69.0 203.6,69.6 205.3,71.1 207.6,71.4 209.2,70.6 211.9,69.6 213.6,69.9 215.8,68.5 217.9,69.8 220.8,72.0 223.2,66.4 226.1,69.6 228.7,71.3 230.9,69.3 232.3,68.7 234.3,73.4 235.8,66.6 238.0,71.6 239.5,69.2 241.8,71.4 243.6,68.6 246.1,70.5 247.7,69.9 249.7,72.4 251.2,71.2 254.0,71.7 256.6,71.7 258.5,69.6 260.4,69.8 262.3,71.3 264.5,72.7 267.1,69.2 269.0,70.0 271.0,68.3 273.8,69.8 276.4,70.1 279.0,68.8 281.7,71.4 284.5,67.9 286.6,70.3 288.4,73.6 290.7,70.3 292.9,69.1 295.7,68.7 297.2,68.2 299.9,68.3 302.3,69.9 304.5,69.5 307.2,70.3 310.1,67.4 312.1,68.9 314.4,70.3 317.2,71.4 318.7,69.9 319.9,70.9 321.2,71.2 324.0,68.9 325.5,69.3 326.8,71.7 328.6,70.0 331.3,73.1 334.1,71.1 336.9,73.8 339.6,68.3 341.8,71.0 344.1,70.7 347.0,70.8 349.5,73.4 352.3,69.0 353.7,71.0 355.2,69.3 356.8,73.0 358.5,72.9 360.6,69.3 362.3,70.7 364.7,72.8 367.1,70.2 369.1,67.9 371.8,69.7 373.6,68.9 375.0,70.8 376.7,68.8 378.0,69.0 380.9,71.7 383.7,69.7 386.5,70.0 387.9,69.0 389.7,70.1 391.8,72.0 394.2,67.9 395.8,69.0 397.2,72.3 399.2,71.1 401.8,71.0 404.0,66.7 406.1,69.6 409.0,71.6 411.7,71.2 414.0,69.6 416.1,69.2 417.5,66.5 419.8,71.8 421.5,71.3 423.4,67.3 425.9,67.0 428.0,67.4 429.6,70.9 431.7,67.4 434.3,71.6 436.3,71.4 439.2,71.6 441.7,69.7 443.2,72.2 446.1,71.8 448.9,71.3 451.1,70.1 454.0,71.4 456.5,69.2 458.3,71.4 460.2,71.5 462.1,68.6 463.7,69.2 466.1,71.6 468.3,66.5 471.1,71.2 473.9,71.0 476.5,71.0 478.2,69.0 480.3,68.3 482.3,70.7 484.4,69.6 487.1,71.1 489.1,71.6 490.9,70.8 493.1,67.1 495.0,70.6 496.6,71.4 498.1,68.5 499.6,70.9 500.9,70.6 502.9,68.8 504.7,67.0 507.1,68.7 508.8,71.6 510.9,71.3 512.7,68.2 515.1,67.9 516.8,71.3 518.7,68.7 520.9,70.2 522.8,68.7 524.2,68.4 525.8,71.6 528.3,70.1 531.0,68.3 533.3,71.6 535.5,70.5 538.4,68.7 541.0,70.9 542.4,70.0 544.3,70.6 546.8,71.0 548.4,69.1 550.8,70.9 553.3,68.6 555.3,68.8 557.1,68.6 558.6,68.6 560.3,68.4 562.0,69.2 563.4,71.7 566.2,69.8 568.8,70.7 570.9,69.6 572.2,69.3 574.7,67.5 576.9,69.6 578.6,68.9 580.5,68.6 583.1,69.4 584.9,70.5 586.4,71.1 588.1,69.0 589.4,69.9 590.6,71.9 593.2,69.5 595.9,69.3 597.6,71.4 599.4,71.3 601.4,71.2 604.0,69.2 606.4,68.9 608.3,72.8 610.7,72.1 612.4,70.6 615.2,69.2 618.1,70.9 619.9,66.7 622.4,70.1 624.7,70.3 626.1,68.9 628.6,69.3 631.0,72.9 633.4,71.1 636.1,66.8 639.0,69.5 641.3,68.8 642.8,72.5 644.6,69.5 646.6,69.3 648.3,70.8 650.6,72.4" fill="none" stroke="#38d0e8" stroke-width="0.8" stroke-linejoin="round"/><polyline points="52.0,73.4 55.2,68.3 57.1,68.8 59.2,66.1 62.2,70.9 64.1,70.6 66.1,68.1 68.2,69.0 70.3,66.9 72.2,68.3 73.9,71.2 76.9,69.9 78.9,69.5 81.3,70.5 83.2,70.7 84.9,67.4 86.4,71.3 89.0,71.6 91.3,67.8 94.5,70.0 96.6,68.5 99.0,68.7 101.6,69.2 103.3,70.5 106.6,71.9 108.0,68.3 110.4,69.0 112.4,68.7 113.9,69.8 115.4,68.2 117.3,72.7 119.6,68.4 122.5,68.7 125.6,71.8 127.7,66.1 129.1,69.4 131.1,66.8 133.7,68.5 136.2,69.9 138.1,68.1 140.6,70.6 143.4,72.8 145.0,70.4 146.7,71.2 148.7,70.9 150.1,69.7 151.7,68.0 153.1,70.9 155.9,71.2 158.1,67.9 160.4,68.6 163.2,71.3 166.4,70.4 169.2,69.6 170.8,69.2 173.9,69.3 176.4,70.2 178.9,67.6 182.0,73.2 184.7,71.9 186.9,66.4 188.7,67.3 190.2,66.0 192.7,67.8 194.2,71.4 195.8,69.8 198.6,72.4 200.8,69.5 203.8,71.1 205.4,72.9 208.2,71.0 211.0,69.6 212.5,70.3 214.5,69.6 216.8,69.5 218.5,72.6 220.3,71.2 223.1,69.7 224.7,69.7 227.5,69.5 230.3,71.0 232.0,70.3 235.2,70.7 236.7,70.9 238.2,69.0 241.2,73.4 243.0,71.2 246.1,69.5 248.2,70.5 250.2,69.2 252.8,70.8 254.5,73.1 256.9,71.4 258.5,66.0 261.1,70.4 264.3,71.0 267.0,68.3 268.7,71.3 270.9,68.5 272.8,71.1 275.9,72.3 278.0,69.7 279.9,68.3 283.1,73.3 285.3,68.0 287.0,70.0 289.2,71.3 291.2,71.4 294.4,72.5 295.8,69.3 297.9,71.1 300.0,70.5 302.9,66.3 304.5,69.1 307.5,71.2 308.9,69.4 311.5,70.3 314.1,71.0 316.2,69.8 318.4,69.1 321.6,67.9 323.8,68.7 326.4,67.8 329.7,71.1 332.8,67.6 334.5,70.2 336.9,71.2 338.2,70.0 340.8,68.8 343.4,67.9 346.2,71.1 347.8,70.2 351.0,68.2 352.5,68.0 354.9,71.2 356.8,69.7 358.3,72.7 359.9,69.6 361.9,68.6 364.1,71.4 366.5,70.9 368.7,68.3 371.6,69.7 374.8,69.6 377.3,70.0 380.4,70.0 382.2,68.5 385.0,68.9 386.9,69.2 388.5,68.4 391.0,68.4 393.1,70.4 395.0,71.2 397.0,71.8 400.2,69.5 402.6,69.7 404.7,72.5 407.2,70.7 409.4,69.8 412.0,70.3 413.4,68.4 415.1,70.1 417.2,70.7 419.9,71.5 422.2,72.7 424.5,68.8 426.7,67.9 429.3,70.2 431.4,69.3 434.3,68.7 435.8,70.9 438.1,68.7 441.1,68.7 442.9,68.6 445.5,70.2 447.4,69.0 449.5,70.7 451.5,70.4 454.3,69.1 457.6,69.7 460.1,69.5 462.6,73.5 465.4,69.4 468.3,69.8 470.9,67.8 472.6,73.3 475.4,70.1 478.0,68.5 480.0,68.8 482.9,67.9 485.5,69.5 488.2,72.1 491.3,69.5 492.9,70.3 495.8,71.1 498.0,71.5 501.1,72.9 504.2,71.7 507.1,69.6 508.6,68.8 511.5,70.3 513.5,71.0 515.5,70.6 517.6,69.4 519.7,69.4 522.4,70.1 525.0,70.7 527.0,70.0 528.9,71.3 531.0,68.9 534.0,71.3 537.2,68.1 539.3,71.1 542.1,71.2 544.4,73.1 546.4,71.0 548.4,71.0 551.2,71.2 553.0,68.8 555.8,70.3 558.5,69.4 561.2,72.2 564.1,71.3 567.2,71.2 568.7,69.5 571.3,68.5 572.9,69.7 574.3,66.5 576.0,68.1 578.9,67.2 581.8,73.0 584.5,71.4 586.3,71.4 588.9,69.5 591.1,72.2 592.9,69.1 595.3,70.3 596.8,67.4 599.9,69.1 601.9,69.5 605.0,70.8 607.0,68.3 610.1,69.1 611.5,71.4 614.7,65.8 617.1,72.0 618.8,69.6 621.3,70.1 622.9,71.1 624.4,67.7 627.5,68.2 629.1,70.4 630.9,70.5 634.1,68.0 637.1,68.0 639.6,70.6 642.0,68.2 645.1,69.2 646.8,68.1 648.3,68.3 650.5,71.0 653.1,67.6" fill="none" stroke="#d868e8" stroke-width="0.8" stroke-linejoin="round"/><polyline points="52.0,69.4 53.2,71.5 56.0,68.8 57.7,71.0 58.9,69.1 60.2,72.5 62.0,69.4 64.2,68.5 65.7,71.3 67.6,71.0 69.1,67.4 70.7,69.9 72.8,71.7 74.4,70.7 76.8,71.1 79.3,69.9 81.5,70.0 83.1,70.3 84.9,70.5 87.7,70.4 89.5,69.4 91.3,69.0 93.9,71.8 95.2,68.3 96.5,71.7 98.4,71.2 99.9,68.7 102.6,70.6 104.1,69.3 105.6,73.3 107.1,70.8 109.1,70.5 111.7,71.3 114.5,71.3 115.8,70.7 117.9,68.8 120.0,67.7 121.6,73.5 123.2,71.5 125.9,70.5 127.9,71.2 130.2,71.4 132.6,68.3 134.4,68.3 136.3,71.1 139.1,69.7 140.9,71.6 142.2,70.4 144.9,71.7 147.4,72.1 148.7,71.7 150.0,70.7 151.7,66.7 153.5,68.1 155.9,71.2 158.5,69.7 160.4,69.7 162.1,68.6 164.4,71.6 165.8,70.0 168.3,68.5 169.9,69.7 172.2,72.6 173.5,69.4 175.5,73.4 178.2,70.0 180.5,69.4 182.1,71.8 184.2,71.6 186.2,72.1 187.6,69.7 189.5,71.5 191.1,68.9 192.7,66.6 194.1,70.5 196.8,70.1 198.2,72.7 200.2,70.6 202.5,69.3 205.0,68.3 207.3,71.0 208.9,70.7 210.3,72.1 211.9,68.5 214.6,69.5 217.1,69.6 219.8,69.5 222.5,71.2 225.3,68.7 226.9,69.6 229.7,69.6 232.1,69.4 234.7,69.1 236.8,70.5 239.5,73.0 241.2,71.7 243.2,68.3 245.5,71.1 246.9,70.3 248.6,73.2 250.2,69.1 251.9,68.5 253.6,66.4 255.3,70.1 257.0,68.8 259.8,71.6 262.4,69.9 264.8,69.9 266.3,69.7 268.2,70.4 269.5,68.5 272.0,66.7 273.9,70.3 276.4,68.5 277.8,72.3 279.6,71.6 282.3,70.0 284.5,70.3 286.5,71.1 288.7,71.1 291.1,69.7 292.8,69.0 295.1,70.2 297.9,68.4 300.6,68.6 302.7,71.8 305.0,70.2 307.8,72.1 309.4,68.9 311.7,69.6 313.0,69.8 314.3,70.1 316.1,71.2 318.0,71.4 320.6,68.0 323.2,70.6 324.6,70.7 327.1,67.2 329.0,70.4 330.6,71.0 332.2,73.1 334.1,70.2 335.7,71.7 337.9,73.5 339.8,68.7 342.1,67.4 344.8,69.0 347.5,71.5 349.1,67.2 351.4,69.4 352.9,68.7 355.3,71.9 357.1,69.3 359.6,70.6 361.3,69.6 363.8,70.7 366.2,70.3 368.4,70.9 370.2,71.7 372.5,70.6 374.7,72.9 376.9,70.3 379.7,69.3 381.4,69.2 383.1,67.7 385.8,72.7 388.3,70.0 389.9,68.9 392.2,71.4 394.2,69.9 396.3,68.4 398.2,71.6 399.8,71.4 401.6,73.1 403.3,68.5 405.3,69.9 407.5,71.3 409.7,66.8 411.3,71.2 414.0,69.5 416.4,70.9 417.7,71.8 420.2,68.7 422.4,70.5 424.1,68.7 426.7,69.3 428.6,66.9 430.2,70.0 431.8,69.0 433.5,69.5 436.0,68.7 438.5,70.6 440.9,68.1 443.2,71.0 445.8,71.0 447.1,72.1 448.4,69.3 450.8,67.3 452.1,68.6 453.8,66.3 455.9,70.4 457.8,66.5 459.2,72.9 460.7,69.4 462.6,68.7 463.9,70.9 465.5,70.8 466.7,70.5 468.8,70.8 470.3,73.5 472.3,68.6 474.8,72.3 476.8,70.3 478.6,70.8 480.6,69.9 482.3,70.7 483.5,66.9 485.5,69.9 488.0,70.9 490.0,70.5 491.3,70.0 493.9,68.3 495.3,70.9 497.3,70.0 498.6,70.8 501.4,71.5 502.6,71.3 504.9,69.1 507.0,68.5 509.2,69.9 511.3,71.2 513.7,70.9 515.3,68.2 517.8,70.3 519.9,73.8 522.2,71.0 523.8,70.7 526.5,69.8 529.3,71.1 531.8,69.2 533.1,73.7 534.5,71.1 536.9,70.7 539.6,70.7 542.2,69.2 544.5,71.7 545.7,69.8 548.3,69.5 550.7,71.1 552.9,69.6 554.6,70.6 555.9,72.9 557.5,72.8 559.8,70.4 562.1,71.4 563.8,71.8 565.8,68.4 567.4,71.4 570.1,70.5 572.0,70.5 574.6,69.1 575.8,71.5 577.9,70.9 579.9,69.6 582.5,71.7 584.3,71.0 586.5,69.2 588.9,71.6 590.3,71.2 592.9,73.0 594.7,71.5 596.2,70.6 598.3,71.0 599.8,71.4 601.1,69.9 602.6,69.9 604.5,72.5 606.5,70.4 608.2,68.3 609.7,70.6 611.5,69.0 613.2,72.8 614.6,72.5 617.2,68.5 619.9,71.6 621.6,70.9 623.9,68.5 626.1,68.7 628.5,71.4 630.9,68.7 633.0,67.4 635.7,69.7 638.5,70.9 640.1,69.8 642.0,69.8 644.4,69.5 646.6,70.8 649.3,70.4 651.2,68.8 652.9,72.5" fill="none" stroke="#e8ece8" stroke-width="0.8" stroke-linejoin="round"/><polyline points="52.0,69.2 53.8,69.2 56.7,72.5 58.1,69.9 60.5,69.3 62.0,68.7 65.0,70.3 68.1,68.0 70.0,69.2 72.1,68.6 74.6,71.0 77.8,68.2 80.4,68.8 82.7,72.3 84.5,68.8 87.8,70.7 91.0,72.5 94.0,66.8 96.4,68.3 97.9,68.9 99.8,70.7 102.9,70.4 104.5,69.0 107.8,71.8 110.6,66.2 113.3,70.1 116.0,67.9 118.3,70.0 120.6,70.8 123.7,67.4 125.4,68.0 127.1,71.1 128.8,70.0 130.8,67.4 133.0,72.0 135.4,69.6 138.5,70.6 140.0,69.6 143.3,68.0 145.0,67.5 146.9,72.4 148.9,69.7 151.7,70.8 154.1,70.4 155.8,70.3 157.3,68.8 159.4,70.3 161.4,72.7 163.1,68.5 165.6,67.9 167.9,68.1 171.0,68.1 173.3,69.9 175.2,68.9 177.4,70.4 180.0,71.9 182.3,68.1 185.3,68.1 187.7,69.2 189.6,69.2 192.7,69.1 195.6,69.8 198.7,68.0 201.1,70.5 203.0,70.1 205.3,68.9 207.2,70.6 210.5,69.0 212.1,67.3 214.7,66.5 217.7,68.5 219.9,68.9 223.1,68.5 225.8,69.8 228.3,72.1 231.0,68.3 233.8,70.7 235.8,70.5 239.0,69.9 241.7,70.8 244.1,66.9 246.1,68.6 247.7,72.7 250.0,70.2 253.3,68.4 256.1,72.8 258.7,68.5 260.5,70.5 262.1,66.6 263.5,67.4 265.9,67.8 268.2,69.8 270.3,70.1 272.8,72.5 274.4,69.2 276.8,68.3 278.6,65.8 280.6,70.0 283.5,68.9 285.2,69.9 286.9,69.3 289.9,70.6 292.5,68.4 294.1,70.4 297.2,68.0 298.9,70.4 301.4,68.0 303.5,68.3 304.9,69.2 308.1,70.2 310.1,66.5 313.0,70.3 315.4,70.2 316.9,70.7 318.6,70.4 321.1,69.2 322.5,69.9 324.7,72.4 328.0,70.3 331.3,70.2 333.4,69.6 336.6,69.4 339.8,70.6 342.5,68.7 344.7,69.5 347.7,66.4 350.4,68.7 353.7,68.7 355.3,69.7 358.5,69.2 361.2,70.2 362.7,69.9 364.4,68.5 366.9,68.3 369.0,70.3 370.5,68.5 372.3,68.4 374.1,69.7 377.0,68.6 378.6,69.4 380.9,68.5 384.1,70.6 386.7,68.0 388.5,67.9 391.7,70.2 393.7,67.5 396.5,70.2 399.6,69.3 401.6,68.1 403.8,70.6 405.4,72.1 408.0,69.5 409.5,70.7 411.5,67.9 414.0,69.7 416.7,69.8 419.7,68.5 421.2,69.9 422.9,70.1 425.5,68.6 427.7,67.5 429.4,69.6 432.4,69.2 434.0,69.7 436.4,70.5 439.6,70.7 441.6,65.9 444.6,69.3 447.7,66.3 450.2,68.1 452.8,70.4 456.1,68.3 458.1,68.2 459.7,68.9 461.2,72.2 463.3,68.8 466.6,69.6 469.5,72.7 471.9,70.7 473.8,68.3 477.0,68.0 480.0,68.4 482.7,70.5 484.9,67.3 487.1,69.1 490.4,66.1 492.2,70.1 495.4,71.4 497.6,67.9 500.2,70.4 503.6,68.0 506.3,70.5 509.2,68.2 511.7,69.5 515.0,68.7 516.7,67.7 519.6,65.9 522.3,71.9 524.0,70.1 525.8,68.6 529.1,68.1 532.2,66.3 534.9,70.2 537.9,70.7 540.4,68.6 543.5,67.9 546.6,70.2 549.4,71.8 552.7,68.6 555.5,68.4 558.8,70.4 561.5,69.2 563.3,67.9 566.3,70.4 569.3,69.1 572.1,72.8 574.7,66.6 576.5,72.6 578.0,68.8 581.1,69.2 583.8,69.0 587.1,68.4 589.4,68.8 592.0,68.3 594.2,72.7 597.2,69.0 599.8,66.2 603.1,71.5 605.3,70.8 608.5,68.6 610.7,72.1 613.9,71.2 616.1,68.4 618.5,69.8 620.6,67.9 623.1,69.9 624.6,72.0 626.6,67.3 629.2,68.7 630.8,69.8 634.0,70.6 637.4,70.4 640.2,70.7 642.2,68.5 645.1,68.3 646.7,69.5 648.4,65.9 651.7,70.7" fill="none" stroke="#40e0a0" stroke-width="0.7" stroke-linejoin="round"/><path d="M52 75.5H654" stroke="#d8dcf4" stroke-width="1"/></svg>
<svg class="a" style="left:150.7px;top:212.8px;" width="12" height="12" viewBox="0 0 12 12"><rect x="0" y="0" width="12" height="12" fill="#fff"/><path d="M2.300 6 4.800 8.700 9.800 3" fill="none" stroke="#111" stroke-width="1.300"/></svg>
<div class="t" style="left:166.5px;top:211px;line-height:16px;height:16px;color:#e6e63c;font-size:11.800px;transform:scaleX(1.0238);transform-origin:0 50%">Motherboard</div>
<svg class="a" style="left:245.7px;top:212.8px;" width="12" height="12" viewBox="0 0 12 12"><rect x="0" y="0" width="12" height="12" fill="#fff"/><path d="M2.300 6 4.800 8.700 9.800 3" fill="none" stroke="#111" stroke-width="1.300"/></svg>
<div class="t" style="left:261.7px;top:211px;line-height:16px;height:16px;color:#e4e4e4;font-size:11.800px;transform:scaleX(0.7947);transform-origin:0 50%">CPU</div>
<svg class="a" style="left:292.5px;top:212.8px;" width="12" height="12" viewBox="0 0 12 12"><rect x="0" y="0" width="12" height="12" fill="#fff"/><path d="M2.300 6 4.800 8.700 9.800 3" fill="none" stroke="#111" stroke-width="1.300"/></svg>
<div class="t" style="left:308.2px;top:211px;line-height:16px;height:16px;color:#36e036;font-size:11.800px;transform:scaleX(0.8949);transform-origin:0 50%">CPU Core #1</div>
<svg class="a" style="left:382.5px;top:212.8px;" width="12" height="12" viewBox="0 0 12 12"><rect x="0" y="0" width="12" height="12" fill="#fff"/><path d="M2.300 6 4.800 8.700 9.800 3" fill="none" stroke="#111" stroke-width="1.300"/></svg>
<div class="t" style="left:398.2px;top:211px;line-height:16px;height:16px;color:#40d8e8;font-size:11.800px;transform:scaleX(0.9049);transform-origin:0 50%">CPU Core #2</div>
<svg class="a" style="left:472.75px;top:212.8px;" width="12" height="12" viewBox="0 0 12 12"><rect x="0" y="0" width="12" height="12" fill="#fff"/><path d="M2.300 6 4.800 8.700 9.800 3" fill="none" stroke="#111" stroke-width="1.300"/></svg>
<div class="t" style="left:488.8px;top:211px;line-height:16px;height:16px;color:#e060e8;font-size:11.800px;transform:scaleX(0.9006);transform-origin:0 50%">CPU Core #3</div>
<svg class="a" style="left:562.75px;top:212.8px;" width="12" height="12" viewBox="0 0 12 12"><rect x="0" y="0" width="12" height="12" fill="#fff"/><path d="M2.300 6 4.800 8.700 9.800 3" fill="none" stroke="#111" stroke-width="1.300"/></svg>
<div class="t" style="left:578.4px;top:211px;line-height:16px;height:16px;color:#e4e4e4;font-size:11.800px;transform:scaleX(0.9063);transform-origin:0 50%">CPU Core #4</div>
<svg class="a" style="left:340.9px;top:234px;" width="12" height="12" viewBox="0 0 12 12"><rect x="0" y="0" width="12" height="12" fill="#fff"/><path d="M2.300 6 4.800 8.700 9.800 3" fill="none" stroke="#111" stroke-width="1.300"/></svg>
<div class="t" style="left:356.5px;top:232px;line-height:16px;height:16px;color:#f0c888;font-size:11.800px;transform:scaleX(0.9268);transform-origin:0 50%">Wdxsky W31-256G</div>
<div class="t" style="right:680.5px;top:247.3px;line-height:16px;height:16px;color:#fff;font-size:11.500px">100<span style="font-size:9px;position:relative;top:-3px">°</span>C</div>
<div class="t" style="right:680.5px;top:313px;line-height:16px;height:16px;color:#fff;font-size:11.500px">0<span style="font-size:9px;position:relative;top:-3px">°</span>C</div>
<div class="t" style="left:706.3px;top:271.3px;line-height:16px;height:16px;color:#c8dcf4;font-size:11px">64</div>
<div class="t" style="left:720px;top:265.3px;line-height:16px;height:16px;color:#40d8e8;font-size:11px">74</div>
<div class="t" style="left:720px;top:267.6px;line-height:16px;height:16px;color:#7aa0f0;font-size:11px">69</div>
<div class="t" style="left:720px;top:287.3px;line-height:16px;height:16px;color:#f0c888;font-size:11px">40</div>
<div class="t" style="left:706.3px;top:294.3px;line-height:16px;height:16px;color:#e6e63c;font-size:11px">30</div>
<div class="a" style="left:23px;top:354px;width:730px;height:148px;background:#000"></div>
<svg class="a" style="left:23px;top:354px;" width="730" height="148" viewBox="0 0 730 148"><path d="M56.6 30.5V118.5M66.6 30.5V118.5M76.6 30.5V118.5M86.6 30.5V118.5M96.6 30.5V118.5M106.6 30.5V118.5M116.6 30.5V118.5M126.6 30.5V118.5M136.6 30.5V118.5M146.6 30.5V118.5M156.6 30.5V118.5M166.6 30.5V118.5M176.6 30.5V118.5M186.6 30.5V118.5M196.6 30.5V118.5M206.6 30.5V118.5M216.6 30.5V118.5M226.6 30.5V118.5M236.6 30.5V118.5M246.6 30.5V118.5M256.6 30.5V118.5M266.6 30.5V118.5M276.6 30.5V118.5M286.6 30.5V118.5M296.6 30.5V118.5M306.6 30.5V118.5M316.6 30.5V118.5M326.6 30.5V118.5M336.6 30.5V118.5M346.6 30.5V118.5M356.6 30.5V118.5M366.6 30.5V118.5M376.6 30.5V118.5M386.6 30.5V118.5M396.6 30.5V118.5M406.6 30.5V118.5M416.6 30.5V118.5M426.6 30.5V118.5M436.6 30.5V118.5M446.6 30.5V118.5M456.6 30.5V118.5M466.6 30.5V118.5M476.6 30.5V118.5M486.6 30.5V118.5M496.6 30.5V118.5M506.6 30.5V118.5M516.6 30.5V118.5M526.6 30.5V118.5M536.6 30.5V118.5M546.6 30.5V118.5M556.6 30.5V118.5M566.6 30.5V118.5M576.6 30.5V118.5M586.6 30.5V118.5M596.6 30.5V118.5M606.6 30.5V118.5M616.6 30.5V118.5M626.6 30.5V118.5M636.6 30.5V118.5M646.6 30.5V118.5M656.6 30.5V118.5M666.6 30.5V118.5M676.6 30.5V118.5M50.3 110.50H679.6M50.3 102.50H679.6M50.3 94.50H679.6M50.3 86.50H679.6M50.3 78.50H679.6M50.3 70.50H679.6M50.3 62.50H679.6M50.3 54.50H679.6M50.3 46.50H679.6M50.3 38.50H679.6" stroke="#1c7628" stroke-width="1" fill="none"/><path d="M51.8 30.5H679.6" stroke="#e8e060" stroke-width="1.200"/><path d="M50.3 118.5H679.6" stroke="#34a044" stroke-width="1.500"/></svg>
<div class="t" style="left:314.4px;top:362px;line-height:16px;height:16px;color:#e6e63c;font-size:11.800px;transform:scaleX(0.8892);transform-origin:0 50%">CPU Usage</div>
<div class="t" style="left:376.3px;top:362px;line-height:16px;height:16px;color:#fff;font-size:11.300px">|</div>
<div class="t" style="left:385.7px;top:362px;line-height:16px;height:16px;color:#36e036;font-size:11.800px;transform:scaleX(0.9719);transform-origin:0 50%">CPU Throttling</div>
<div class="t" style="right:706.7px;top:377.2px;line-height:16px;height:16px;color:#fff;font-size:11px">100%</div>
<div class="t" style="right:706.7px;top:465px;line-height:16px;height:16px;color:#fff;font-size:11px">0%</div>
<div class="t" style="left:706.5px;top:377.2px;line-height:16px;height:16px;color:#e6e63c;font-size:11px">100%</div>
<div class="t" style="left:706.5px;top:465px;line-height:16px;height:16px;color:#36e036;font-size:11px">0%</div>
<div class="t" style="left:23.2px;top:521px;line-height:16px;height:16px;font-size:11.800px;transform:scaleX(0.9895);transform-origin:0 50%">Remaining Battery:</div>
<div class="a" style="left:134.8px;top:517px;width:80.4px;height:24px;background:#000"></div>
<div class="t" style="left:148.4px;top:521px;line-height:16px;height:16px;color:#30d030;font-size:11.300px;transform:scaleX(1.0263);transform-origin:0 50%">No battery</div>
<div class="t" style="left:238.7px;top:521px;line-height:16px;height:16px;font-size:11.800px;transform:scaleX(0.9299);transform-origin:0 50%">Test Started:</div>
<div class="a" style="left:313px;top:517px;width:140px;height:24px;background:#000"></div>
<div class="t" style="left:332px;top:521px;line-height:16px;height:16px;color:#30d030;font-size:11.300px;transform:scaleX(0.9732);transform-origin:0 50%">2022/12/15 14:23:09</div>
<div class="t" style="left:476.9px;top:521px;line-height:16px;height:16px;font-size:11.800px;transform:scaleX(0.9562);transform-origin:0 50%">Elapsed Time:</div>
<div class="a" style="left:561px;top:517px;width:80px;height:24px;background:#000"></div>
<div class="t" style="left:579.9px;top:521px;line-height:16px;height:16px;color:#30d030;font-size:11.300px;transform:scaleX(0.9571);transform-origin:0 50%">04:15:02</div>
<div class="a" style="left:8px;top:563px;width:73px;height:21px;background:#cccccc;border:1px solid #bfbfbf"></div>
<div class="t" style="left:32.2px;top:566px;line-height:16px;height:16px;font-size:11.800px;color:#828282;transform:scaleX(0.9551);transform-origin:0 50%">Start</div>
<div class="a" style="left:89px;top:563px;width:73px;height:21px;background:#e1e1e1;border:1px solid #adadad"></div>
<div class="t" style="left:113.2px;top:566px;line-height:16px;height:16px;font-size:11.800px;transform:scaleX(0.9640);transform-origin:0 50%">Stop</div>
<div class="a" style="left:193px;top:563px;width:72.5px;height:21px;background:#e1e1e1;border:1px solid #adadad"></div>
<div class="t" style="left:216.2px;top:566px;line-height:16px;height:16px;font-size:11.800px;transform:scaleX(0.9610);transform-origin:0 50%">Clear</div>
<div class="a" style="left:274px;top:563px;width:72.5px;height:21px;background:#e1e1e1;border:1px solid #adadad"></div>
<div class="t" style="left:297.9px;top:566px;line-height:16px;height:16px;font-size:11.800px;transform:scaleX(0.9035);transform-origin:0 50%">Save</div>
<div class="a" style="left:378.3px;top:563px;width:72.4px;height:21px;background:#e1e1e1;border:1px solid #adadad"></div>
<div class="t" style="left:397.5px;top:566px;line-height:16px;height:16px;font-size:11.800px;transform:scaleX(0.9015);transform-origin:0 50%">CPUID</div>
<div class="a" style="left:459.3px;top:563px;width:72.4px;height:21px;background:#e1e1e1;border:1px solid #adadad"></div>
<div class="t" style="left:465px;top:566px;line-height:16px;height:16px;font-size:11.800px;transform:scaleX(0.9588);transform-origin:0 50%">Preferences</div>
<div class="a" style="left:695.2px;top:563px;width:72.4px;height:21px;background:#cccccc;border:1px solid #bfbfbf"></div>
<div class="t" style="left:717.4px;top:566px;line-height:16px;height:16px;font-size:11.800px;color:#828282;transform:scaleX(0.9579);transform-origin:0 50%">Close</div></div></div>
<div class="win act" style="left:1201px;top:221px;width:665px;height:591px;"><div class="a" style="left:0;top:0;width:665px;height:591px;overflow:hidden"><svg class="a" style="left:8.5px;top:8px;" width="17" height="15" viewBox="0 0 17 15"><rect x="0" y="4" width="4" height="9" fill="#9aa3aa"/><path d="M3.500 2.500 16 1 16.500 10.500 4 12z" fill="#e4eaef" stroke="#8f9aa3" stroke-width=".9"/><path d="M5 9l2-4 1.500 3 1.500-4.500 1.500 4 1.200-2 1.200 2 1.200-1.200" fill="none" stroke="#2b8ad6" stroke-width=".9"/><path d="M7.500 12h5l.7 1.800h-6.500z" fill="#aab3ba"/><ellipse cx="10" cy="14" rx="4.500" ry="1" fill="#cfd6dc"/></svg>
<div class="t" style="left:30.3px;top:6.6px;line-height:16px;height:16px;font-size:12px">任务管理器</div>
<svg class="a" style="left:546px;top:9px;" width="10" height="10" viewBox="0 0 10 10"><path d="M0 5.500h10" stroke="#000" stroke-width="1" fill="none"/></svg>
<svg class="a" style="left:591px;top:9px;" width="10" height="10" viewBox="0 0 10 10"><rect x=".5" y=".5" width="9" height="9" stroke="#000" stroke-width="1" fill="none"/></svg>
<svg class="a" style="left:637px;top:9px;" width="10" height="10" viewBox="0 0 10 10"><path d="M0 0 10 10M10 0 0 10" stroke="#000" stroke-width="1.050" fill="none"/></svg>
<div class="t" style="left:7.8px;top:31.7px;line-height:16px;height:16px;font-size:12px;transform:scaleX(0.9536);transform-origin:0 50%">文件(<u>F</u>)</div>
<div class="t" style="left:60px;top:31.7px;line-height:16px;height:16px;font-size:12px;transform:scaleX(1.0042);transform-origin:0 50%">选项(<u>O</u>)</div>
<div class="t" style="left:116px;top:31.7px;line-height:16px;height:16px;font-size:12px;transform:scaleX(0.9813);transform-origin:0 50%">查看(<u>V</u>)</div>
<div class="a" style="left:0px;top:48.5px;width:665px;height:1px;background:#f0f0f0"></div>
<div class="a" style="left:0px;top:76px;width:665px;height:1px;background:#d9d9d9"></div>
<div class="a" style="left:3.6px;top:55px;width:34.9px;height:21.5px;background:#f0f0f0;border:1px solid #d9d9d9;border-bottom:none"></div>
<div class="t" style="left:3.6px;width:33.9px;text-align:center;top:57.7px;line-height:16px;height:16px;font-size:12px">进程</div>
<div class="a" style="left:76.5px;top:55px;width:82.9px;height:21.5px;background:#f0f0f0;border:1px solid #d9d9d9;border-bottom:none"></div>
<div class="t" style="left:76.5px;width:81.9px;text-align:center;top:57.7px;line-height:16px;height:16px;font-size:12px">应用历史记录</div>
<div class="a" style="left:158.4px;top:55px;width:37px;height:21.5px;background:#f0f0f0;border:1px solid #d9d9d9;border-bottom:none"></div>
<div class="t" style="left:158.4px;width:36px;text-align:center;top:57.7px;line-height:16px;height:16px;font-size:12px">启动</div>
<div class="a" style="left:194.4px;top:55px;width:36.85px;height:21.5px;background:#f0f0f0;border:1px solid #d9d9d9;border-bottom:none"></div>
<div class="t" style="left:194.4px;width:35.85px;text-align:center;top:57.7px;line-height:16px;height:16px;font-size:12px">用户</div>
<div class="a" style="left:230.25px;top:55px;width:61px;height:21.5px;background:#f0f0f0;border:1px solid #d9d9d9;border-bottom:none"></div>
<div class="t" style="left:230.25px;width:60px;text-align:center;top:57.7px;line-height:16px;height:16px;font-size:12px">详细信息</div>
<div class="a" style="left:290.25px;top:55px;width:35.35px;height:21.5px;background:#f0f0f0;border:1px solid #d9d9d9;border-bottom:none"></div>
<div class="t" style="left:290.25px;width:34.35px;text-align:center;top:57.7px;line-height:16px;height:16px;font-size:12px">服务</div>
<div class="a" style="left:37px;top:52.5px;width:40px;height:24.5px;background:#fff;border:1px solid #d9d9d9;border-bottom:none"></div>
<div class="t" style="left:37px;width:40px;text-align:center;top:56.5px;line-height:16px;height:16px;font-size:12px">性能</div>
<div class="a" style="left:40.5px;top:55.5px;width:33.5px;height:18.5px;border:1px dotted #333"></div>
<div class="a" style="left:5.3px;top:87.5px;width:203.5px;height:59.5px;background:#d9d9d9"></div>
<div class="a" style="left:15.3px;top:97.3px;width:59.4px;height:40px;background:#eef6fc;border:1px solid #1a8fc4"></div>
<div class="t" style="left:85.5px;top:93.3px;line-height:20px;height:20px;font-size:15.500px;transform:scaleX(0.9747);transform-origin:0 50%">CPU</div>
<div class="t" style="left:86.5px;top:113.6px;line-height:16px;height:16px;font-size:12px;transform:scaleX(1.0051);transform-origin:0 50%">100%&nbsp; 3.46 GHz</div>
<div class="a" style="left:15.3px;top:157.3px;width:59.4px;height:40px;background:#f4f0f6;border:1px solid #9a2eb5"></div>
<svg class="a" style="left:15.3px;top:157.3px;" width="59.4" height="40" viewBox="0 0 59.4 40"><path d="M0 1.500h38" stroke="#9a2eb5" stroke-width="1.500"/></svg>
<div class="t" style="left:85.5px;top:154px;line-height:20px;height:20px;font-size:15.600px">内存</div>
<div class="t" style="left:86.5px;top:173.8px;line-height:16px;height:16px;font-size:12px;transform:scaleX(1.0371);transform-origin:0 50%">23.4/23.8 GB (98%)</div>
<div class="a" style="left:15.3px;top:217.3px;width:59.4px;height:49.4px;background:#fff;border:1px solid #5aa82a"></div>
<svg class="a" style="left:15.3px;top:217.3px;" width="59.4" height="49.4" viewBox="0 0 59.4 49.4"><path d="M33 48.500 35 36l2 8 2-10 2 12 2-8 2 9 2-16 2 12 2-6 2 8 2-17 2 13 1 7z" fill="#cfe8b8" stroke="#5aa82a" stroke-width=".9"/></svg>
<div class="t" style="left:85.5px;top:213.5px;line-height:20px;height:20px;font-size:15.600px;transform:scaleX(1.0062);transform-origin:0 50%">磁盘 0 (C:)</div>
<div class="t" style="left:86.5px;top:233.8px;line-height:16px;height:16px;font-size:12px;transform:scaleX(0.8875);transform-origin:0 50%">SSD</div>
<div class="t" style="left:86.5px;top:251px;line-height:16px;height:16px;font-size:12px;transform:scaleX(0.9975);transform-origin:0 50%">0%</div>
<div class="a" style="left:15.3px;top:287px;width:59.4px;height:49.6px;background:#fff;border:1px solid #b5651d"></div>
<svg class="a" style="left:15.3px;top:287px;" width="59.4" height="49.6" viewBox="0 0 59.4 49.6"><path d="M33 49 34.500 2h3l1.500 47z M39 49l2-47h1.500l2 40 2-40h2l1 47z M49 49l1.500-47h3l1 30 1.500-30h2v47z" fill="#f6e3d0" stroke="#b5651d" stroke-width=".9"/><path d="M36 2v47M46 2v47M56 2v47" stroke="#b5651d" stroke-width=".8" stroke-dasharray="1 1"/></svg>
<div class="t" style="left:85.5px;top:284px;line-height:20px;height:20px;font-size:15.600px">以太网</div>
<div class="t" style="left:86.5px;top:303.7px;line-height:16px;height:16px;font-size:12px">以太网</div>
<div class="t" style="left:86.5px;top:320.8px;line-height:16px;height:16px;font-size:12px;transform:scaleX(1.0694);transform-origin:0 50%"><span style="color:#6e6e6e">发送:</span> 0 <span style="color:#6e6e6e">接收:</span> 0 Kbps</div>
<div class="a" style="left:15.3px;top:357.3px;width:59.4px;height:49.4px;background:#fff;border:1px solid #1a8fc4"></div>
<svg class="a" style="left:15.3px;top:357.3px;" width="59.4" height="49.4" viewBox="0 0 59.4 49.4"><path d="M42 48.500l1.200-3 1 3zM51 48.500l1-1.500 1 1.500zM56 48.500l1-2 1 2z" fill="#1a8fc4" stroke="#1a8fc4" stroke-width=".6"/></svg>
<div class="t" style="left:85.5px;top:353.4px;line-height:20px;height:20px;font-size:15.500px;transform:scaleX(1.0083);transform-origin:0 50%">GPU 0</div>
<div class="t" style="left:86.5px;top:373.8px;line-height:16px;height:16px;font-size:12px;transform:scaleX(1.0312);transform-origin:0 50%">Intel(R) UHD Gra...</div>
<div class="t" style="left:86.5px;top:391px;line-height:16px;height:16px;font-size:12px;transform:scaleX(0.9975);transform-origin:0 50%">2%</div>
<div class="a" style="left:212.3px;top:97px;width:1px;height:440px;background:#dadada"></div>
<div class="t" style="left:238px;top:88.4px;line-height:40px;height:40px;font-size:28.300px;transform:scaleX(.895);transform-origin:0 50%">CPU</div>
<div class="t" style="right:24.4px;top:101.8px;line-height:22px;height:22px;font-size:17px;transform:scaleX(0.9816);transform-origin:100% 50%">12th Gen Intel(R) Core(TM) i7-12700</div>
<div class="t" style="left:239px;top:131.3px;line-height:16px;height:16px;font-size:11px;color:#6e6e6e">% 利用率</div>
<div class="t" style="right:24px;top:131.3px;line-height:16px;height:16px;font-size:11px;color:#6e6e6e">100%</div>
<div class="a" style="left:239.2px;top:149.8px;width:401.6px;height:184.8px;background:#f0f6fb"></div>
<svg class="a" style="left:239.2px;top:149.8px;" width="401.6" height="184.8" viewBox="0 0 401.6 184.8"><path d="M41.2 0V184.8M109.2 0V184.8M177.1 0V184.8M245.1 0V184.8M313.0 0V184.8M381.2 0V184.8M0 18.48H401.6M0 36.96H401.6M0 55.44H401.6M0 73.92H401.6M0 92.40H401.6M0 110.88H401.6M0 129.36H401.6M0 147.84H401.6M0 166.32H401.6" stroke="#d4e4f0" stroke-width="1" fill="none"/><rect x=".5" y=".5" width="400.6" height="183.8" fill="none" stroke="#1a8fc4" stroke-width="1.200"/></svg>
<div class="t" style="left:239px;top:337px;line-height:16px;height:16px;font-size:11px;color:#6e6e6e">60 秒</div>
<div class="t" style="right:24px;top:337px;line-height:16px;height:16px;font-size:11px;color:#6e6e6e">0</div>
<div class="t" style="left:239px;top:364.4px;line-height:16px;height:16px;font-size:12px;color:#6e6e6e">利用率</div>
<div class="t" style="left:312.8px;top:364.4px;line-height:16px;height:16px;font-size:12px;color:#6e6e6e">速度</div>
<div class="t" style="left:239px;top:380px;line-height:28px;height:28px;font-size:20.600px;transform:scaleX(1.0202);transform-origin:0 50%">100%</div>
<div class="t" style="left:313.5px;top:380px;line-height:28px;height:28px;font-size:20.600px;transform:scaleX(0.9912);transform-origin:0 50%">3.46 GHz</div>
<div class="t" style="left:239px;top:416.4px;line-height:16px;height:16px;font-size:12px;color:#6e6e6e">进程</div>
<div class="t" style="left:295.3px;top:416.4px;line-height:16px;height:16px;font-size:12px;color:#6e6e6e">线程</div>
<div class="t" style="left:362.8px;top:416.4px;line-height:16px;height:16px;font-size:12px;color:#6e6e6e">句柄</div>
<div class="t" style="left:239px;top:431.8px;line-height:28px;height:28px;font-size:20.600px;transform:scaleX(1.0183);transform-origin:0 50%">155</div>
<div class="t" style="left:295.3px;top:431.8px;line-height:28px;height:28px;font-size:20.600px;transform:scaleX(1.0201);transform-origin:0 50%">2409</div>
<div class="t" style="left:363.3px;top:431.8px;line-height:28px;height:28px;font-size:20.600px;transform:scaleX(1.0256);transform-origin:0 50%">76985</div>
<div class="t" style="left:239px;top:468.4px;line-height:16px;height:16px;font-size:12px;color:#6e6e6e">正常运行时间</div>
<div class="t" style="left:239px;top:483.8px;line-height:28px;height:28px;font-size:20.600px;transform:scaleX(1.0091);transform-origin:0 50%">0:04:16:37</div>
<div class="t" style="left:435.3px;top:363.6px;line-height:16px;height:16px;font-size:12px;color:#6e6e6e">基准速度:</div>
<div class="t" style="left:512.8px;top:363.6px;line-height:16px;height:16px;font-size:12px;transform:scaleX(1.0111);transform-origin:0 50%">2.10 GHz</div>
<div class="t" style="left:435.3px;top:383.6px;line-height:16px;height:16px;font-size:12px;color:#6e6e6e">插槽:</div>
<div class="t" style="left:512.8px;top:383.6px;line-height:16px;height:16px;font-size:12px">1</div>
<div class="t" style="left:435.3px;top:403.6px;line-height:16px;height:16px;font-size:12px;color:#6e6e6e">内核:</div>
<div class="t" style="left:512.8px;top:403.6px;line-height:16px;height:16px;font-size:12px;transform:scaleX(0.9739);transform-origin:0 50%">12</div>
<div class="t" style="left:435.3px;top:423.6px;line-height:16px;height:16px;font-size:12px;color:#6e6e6e">逻辑处理器:</div>
<div class="t" style="left:512.8px;top:423.6px;line-height:16px;height:16px;font-size:12px;transform:scaleX(0.9739);transform-origin:0 50%">20</div>
<div class="t" style="left:435.3px;top:443.6px;line-height:16px;height:16px;font-size:12px;color:#6e6e6e">虚拟化:</div>
<div class="t" style="left:512.8px;top:443.6px;line-height:16px;height:16px;font-size:12px">已启用</div>
<div class="t" style="left:435.3px;top:463.6px;line-height:16px;height:16px;font-size:12px;color:#6e6e6e">L1 缓存:</div>
<div class="t" style="left:512.8px;top:463.6px;line-height:16px;height:16px;font-size:12px;transform:scaleX(1.0390);transform-origin:0 50%">1.0 MB</div>
<div class="t" style="left:435.3px;top:483.6px;line-height:16px;height:16px;font-size:12px;color:#6e6e6e">L2 缓存:</div>
<div class="t" style="left:512.8px;top:483.6px;line-height:16px;height:16px;font-size:12px;transform:scaleX(1.0461);transform-origin:0 50%">12.0 MB</div>
<div class="t" style="left:435.3px;top:503.6px;line-height:16px;height:16px;font-size:12px;color:#6e6e6e">L3 缓存:</div>
<div class="t" style="left:512.8px;top:503.6px;line-height:16px;height:16px;font-size:12px;transform:scaleX(1.0461);transform-origin:0 50%">25.0 MB</div>
<svg class="a" style="left:9px;top:557px;" width="19" height="19" viewBox="0 0 19 19"><circle cx="9.500" cy="9.500" r="8.700" fill="#fff" stroke="#8a8a8a" stroke-width="1"/><path d="M5.500 11.500 9.500 7.500 13.500 11.500" fill="none" stroke="#8a8a8a" stroke-width="1.200"/></svg>
<div class="t" style="left:35.4px;top:559.2px;line-height:16px;height:16px;font-size:12px;transform:scaleX(1.0424);transform-origin:0 50%">简略信息(<u>D</u>)</div>
<div class="a" style="left:111px;top:558px;width:1px;height:16px;background:#d0d0d0"></div>
<svg class="a" style="left:119.5px;top:558.5px;" width="16" height="16" viewBox="0 0 16 16"><circle cx="8" cy="8" r="7.200" fill="#f4f4f4" stroke="#8a8a8a" stroke-width="1.300"/><path d="M8 8 5 3.500" stroke="#c82020" stroke-width="1.800"/><path d="M8 8 10 12" stroke="#c82020" stroke-width="1"/></svg>
<div class="t" style="left:141.3px;top:559.2px;line-height:16px;height:16px;font-size:12px;color:#0066cc">打开资源监视器</div></div></div>
<div class="a" id="tb" style="left:0;top:1040px;width:1920px;height:40px;background:linear-gradient(90deg,#20343e 0,#20343f 500px,#1f323f 900px,#1e2e42 1300px,#1c2a45 1700px,#1b2746 1920px)">
<svg class="a" style="left:16px;top:12px" width="16" height="16" viewBox="0 0 16 16" fill="#fff"><path d="M0 2.300 6.500 1.400v6.200H0zM7.300 1.300 16 0v7.600H7.300zM0 8.400h6.500v6.200L0 13.700zM7.300 8.400H16V16l-8.700-1.300z"/></svg>
<div class="a" style="left:48px;top:0;width:343px;height:40px;background:#f3f3f3;border-top:1px solid #e6e6e6"></div>
<svg class="a" style="left:59px;top:10px" width="20" height="20" viewBox="0 0 20 20" fill="none" stroke="#222" stroke-width="1.500"><circle cx="11.500" cy="7.500" r="5"/><path d="M8 11.200 1.800 17.500"/></svg>
<div class="t" style="left:88px;top:11px;font-size:14px;line-height:20px;height:20px;color:#3c3c3c">在这里输入你要搜索的内容</div>
<div class="a" style="left:408px;top:12px;width:16px;height:16px;border-radius:50%;border:2.200px solid #fff"></div>
<svg class="a" style="left:454px;top:10px" width="22" height="20" viewBox="0 0 22 20" fill="none" stroke="#fff" stroke-width="1.400"><rect x="3.700" y="5.700" width="9.600" height="8.600"/><path d="M1 2.700h2.700M1 17.300h2.700M13.300 2.700H16M13.300 17.300H16M3.700 2v3.700M13.300 2v3.700M3.700 14.300V18M13.300 14.300V18"/><path d="M17.500 3.500v1.500M17.500 8v9" stroke-width="1.800"/></svg>
<svg class="a" style="left:502px;top:8px" width="24" height="24" viewBox="0 0 256 256">
<defs>
<linearGradient id="eg1t" x1="63" y1="84" x2="241" y2="84" gradientTransform="matrix(1 0 0 -1 0 266)" gradientUnits="userSpaceOnUse"><stop offset="0" stop-color="#0c59a4"/><stop offset="1" stop-color="#114a8b"/></linearGradient>
<linearGradient id="eg2t" x1="157" y1="161" x2="46" y2="40" gradientTransform="matrix(1 0 0 -1 0 266)" gradientUnits="userSpaceOnUse"><stop offset="0" stop-color="#1b9de2"/><stop offset=".16" stop-color="#1595df"/><stop offset=".67" stop-color="#0680d7"/><stop offset="1" stop-color="#0078d4"/></linearGradient>
<radialGradient id="eg3t" cx="-25" cy="218" r="380" gradientUnits="userSpaceOnUse" gradientTransform="translate(30 -170)"><stop offset="0" stop-color="#35c1f1"/><stop offset=".45" stop-color="#34c1ed"/><stop offset=".6" stop-color="#2fc2df"/><stop offset=".72" stop-color="#2bc3d2"/><stop offset=".88" stop-color="#36c752"/><stop offset="1" stop-color="#7fe04d"/></radialGradient>
<linearGradient id="eg4t" x1="40" y1="40" x2="250" y2="120" gradientUnits="userSpaceOnUse"><stop offset="0" stop-color="#2fb0ea"/><stop offset=".45" stop-color="#33c1e6"/><stop offset=".75" stop-color="#45cc8a"/><stop offset="1" stop-color="#7fe04d"/></linearGradient>
</defs>
<path d="M231.1 190.5a93.800 93.800 0 0 1-10.500 4.700 101.900 101.900 0 0 1-35.900 6.400c-47.300 0-88.500-32.500-88.500-74.300a31.500 31.500 0 0 1 16.400-27.300c-42.800 1.800-53.800 46.400-53.800 72.500 0 73.900 68.100 81.400 82.800 81.400 7.900 0 19.800-2.300 27-4.600l1.300-.4a128.300 128.300 0 0 0 66.600-52.800 4 4 0 0 0-5.400-5.600z" fill="url(#eg1t)"/>
<path d="M105.700 241.400a79.200 79.200 0 0 1-22.700-21.300 80.700 80.700 0 0 1 29.500-120c3.200-1.500 8.500-4.200 15.600-4.100a32.400 32.400 0 0 1 25.700 13 31.900 31.900 0 0 1 6.300 18.700c0-.2 24.500-79.600-80-79.600-43.900 0-80 41.600-80 78.200a130.200 130.200 0 0 0 12.100 56 128 128 0 0 0 156.400 67 75.500 75.500 0 0 1-62.800-7.900z" fill="url(#eg2t)"/>
<path d="M152.300 148.900c-.9 1-3.400 2.500-3.400 5.600 0 2.600 1.700 5.200 4.800 7.300 14.300 10 41.400 8.600 41.500 8.600a59.600 59.600 0 0 0 30.300-8.300 61.400 61.400 0 0 0 30.400-52.900c.3-22.400-8-37.300-11.300-43.900C223.500 24.200 178 0 128 0a128 128 0 0 0-128 126.200c.5-36.500 36.800-66 80-66 3.500 0 23.500.3 42 10 16.300 8.600 24.800 18.900 30.800 29.200 6.100 10.600 7.200 24.100 7.200 29.500 0 5.300-2.700 13.300-7.800 19.900z" fill="url(#eg4t)"/>
</svg>
<svg class="a" style="left:551px;top:9px" width="24" height="22" viewBox="0 0 24 22"><path d="M1 2.500h8l2 2.500h12v15.500h-22z" fill="#e8a825"/><path d="M1 6.500h22v14h-22z" fill="#fbd667"/><path d="M6.500 13h11v7.500h-11z" fill="#3e90e0"/><path d="M9 16.500h6v4h-6z" fill="#fbd667"/></svg>
<svg class="a" style="left:600px;top:7px" width="24" height="25" viewBox="0 0 24 25"><path d="M8 7.500v-2a4 4 0 0 1 8 0v2" fill="none" stroke="#fff" stroke-width="1.500"/><path d="M1 7.500h22v15.500a1.500 1.500 0 0 1-1.500 1.500h-19a1.500 1.500 0 0 1-1.500-1.500z" fill="#fff"/>
<rect x="6.500" y="10.500" width="5" height="5" fill="#f25022"/><rect x="12.500" y="10.500" width="5" height="5" fill="#7fba00"/><rect x="6.500" y="16.500" width="5" height="5" fill="#00a4ef"/><rect x="12.500" y="16.500" width="5" height="5" fill="#ffb900"/></svg>
<svg class="a" style="left:649px;top:10px" width="26" height="21" viewBox="0 0 26 21"><path d="M13 .5 25 8v12H1V8z" fill="#fff"/><path d="M1.500 8.500 24 10.500 15 14.500 16.500 19.500 9 12.500z" fill="#20343e"/><path d="M1.500 8.500 9 12.500 16.500 19.500 H1.200z" fill="#fff"/></svg>
<div class="a" style="left:687px;top:0;width:48px;height:40px;background:rgba(255,255,255,.20)"></div>
<svg class="a" style="left:698px;top:8px" width="26" height="25" viewBox="0 0 26 25"><rect x="2" y="4" width="6" height="14" fill="#9aa3aa"/><path d="M5 3 23.500 1 24 15 6 17.500z" fill="#dfe5ea" stroke="#8f9aa3" stroke-width="1"/><path d="M7.500 5 21.500 3.500 22 13 8 15z" fill="#f7fbff"/><path d="M8 12l2.500-5 1.800 4 2-6.500 2 6 1.500-3 1.500 3.500 2-2" fill="none" stroke="#2b8ad6" stroke-width="1.100"/><path d="M11 17.500h7l1 3h-8.500z" fill="#aab3ba"/><ellipse cx="15" cy="22" rx="7" ry="2.200" fill="#cfd6dc"/></svg>
<div class="a" style="left:747px;top:8px;width:24px;height:24px;background:#b01116;overflow:hidden"><div class="a" style="left:0;top:1px;width:24px;text-align:center;font:bold 20px/22px 'Liberation Sans',sans-serif;color:#fff;letter-spacing:-1.500px">64</div></div>
<svg class="a" style="left:795px;top:9px" width="28" height="24" viewBox="0 0 52 44">
<path d="M17.500 2C8.400 2 1 8 1 15.500c0 4.200 2.300 7.900 6 10.400L5.500 31l5.700-3c2 .6 4.100 1 6.300 1 9.100 0 16.500-6 16.500-13.500S26.600 2 17.500 2z" fill="#3fc83f"/>
<circle cx="12" cy="11.500" r="2" fill="#0c5a1c"/><circle cx="22.500" cy="11.500" r="2" fill="#0c5a1c"/>
<path d="M35.500 16C27.500 16 21 21.200 21 27.700S27.500 39.500 35.500 39.500c1.800 0 3.500-.3 5.100-.8l4.900 2.600-1.300-4.300c3.300-2.100 5.300-5.400 5.300-9.200C49.500 21.200 43.200 16 35.500 16z" fill="#ececec"/>
<circle cx="30.500" cy="24.500" r="1.700" fill="#8a8a8a"/><circle cx="40" cy="24.500" r="1.700" fill="#8a8a8a"/></svg>
<div class="a" style="left:687px;top:38px;width:48px;height:2px;background:#76b9ed"></div>
<div class="a" style="left:740px;top:38px;width:33px;height:2px;background:#76b9ed"></div><div class="a" style="left:774px;top:38px;width:5px;height:2px;background:#5a93c2"></div>
<div class="a" style="left:789px;top:38px;width:40px;height:2px;background:#76b9ed"></div>
<div class="t" style="left:1397px;top:3px;width:80px;text-align:center;color:#fff;font-size:12px">76℃</div>
<div class="t" style="left:1397px;top:20px;width:80px;text-align:center;color:#fff;font-size:12px">CPU温度</div>
<svg class="a" style="left:1578px;top:10px" width="26" height="18" viewBox="0 0 26 18"><defs><linearGradient id="cl1" x1="0" y1="0" x2="0" y2="1"><stop offset="0" stop-color="#e8eefb"/><stop offset="1" stop-color="#9fb4e8"/></linearGradient></defs><path d="M6 16.500a5 5 0 0 1-.8-9.900A7 7 0 0 1 18.500 5.200 5.700 5.700 0 0 1 20 16.500z" fill="url(#cl1)"/></svg>
<div class="t" style="left:1611px;top:10px;font-size:15px;line-height:20px;height:20px;color:#fff">14°C</div>
<div class="t" style="left:1651px;top:10px;font-size:14px;line-height:20px;height:20px;color:#fff">阴</div>
<svg class="a" style="left:1681px;top:14px" width="14" height="10" viewBox="0 0 14 10" fill="none" stroke="#fff" stroke-width="1.300"><path d="M1 8.500 7 2.500 13 8.500"/></svg>
<svg class="a" style="left:1702px;top:13px" width="18" height="15" viewBox="0 0 52 44">
<path d="M17.500 2C8.400 2 1 8 1 15.500c0 4.200 2.300 7.900 6 10.400L5.500 31l5.700-3c2 .6 4.100 1 6.300 1 9.100 0 16.500-6 16.500-13.500S26.600 2 17.500 2z" fill="#3fc83f"/>
<path d="M35.500 16C27.500 16 21 21.200 21 27.700S27.500 39.500 35.500 39.500c1.800 0 3.500-.3 5.100-.8l4.900 2.600-1.300-4.300c3.300-2.100 5.300-5.400 5.300-9.200C49.500 21.200 43.200 16 35.500 16z" fill="#ececec"/></svg>
<svg class="a" style="left:1727px;top:12px" width="18" height="17" viewBox="0 0 18 17" fill="none" stroke="#fff" stroke-width="1.200"><rect x="5.600" y="2.600" width="11" height="8"/><path d="M11 10.600v3.500M8 14.200h6.500"/><rect x="1.600" y="3.600" width="3" height="4" fill="#1e2e42"/><path d="M3 7.600v6.600h4"/></svg>
<svg class="a" style="left:1750px;top:12px" width="18" height="16" viewBox="0 0 18 16" fill="none" stroke="#fff" stroke-width="1.200"><path d="M1.600 5.600h2.800l3.500-3.500v11.800l-3.500-3.500H1.600z"/><path d="M10.300 5.500a3.500 3.500 0 0 1 0 5M12.300 3.500a6.300 6.300 0 0 1 0 9" stroke-width="1"/><path d="M14.300 1.700a9 9 0 0 1 0 12.600" stroke-width="1" stroke-opacity=".45"/></svg>
<div class="t" style="left:1776px;top:10px;font-size:14px;line-height:20px;height:20px;color:#fff">英</div>
<div class="t" style="left:1790px;top:3px;width:80px;text-align:center;color:#fff;font-size:12px">18:38</div>
<div class="t" style="left:1790px;top:21px;width:80px;text-align:center;color:#fff;font-size:12px">2022/12/15</div>
<svg class="a" style="left:1878px;top:11px" width="18" height="18" viewBox="0 0 18 18"><path d="M1 1h16v12H7l-3 3.500V13H1z" fill="#fff"/><path d="M3.500 4.500h11M3.500 7h11M3.500 9.500h7" stroke="#1c2a45" stroke-width="1.200"/></svg>
<div class="a" style="left:1886px;top:20px;width:16px;height:16px;border-radius:50%;background:#1c2a45;border:1px solid #9aa3b4;color:#fff;font-size:10.500px;font-weight:bold;line-height:14px;text-align:center">2</div>
<div class="a" style="left:1914px;top:0;width:1px;height:40px;background:#6d7785"></div>
</div>
</div>
</body></html>
